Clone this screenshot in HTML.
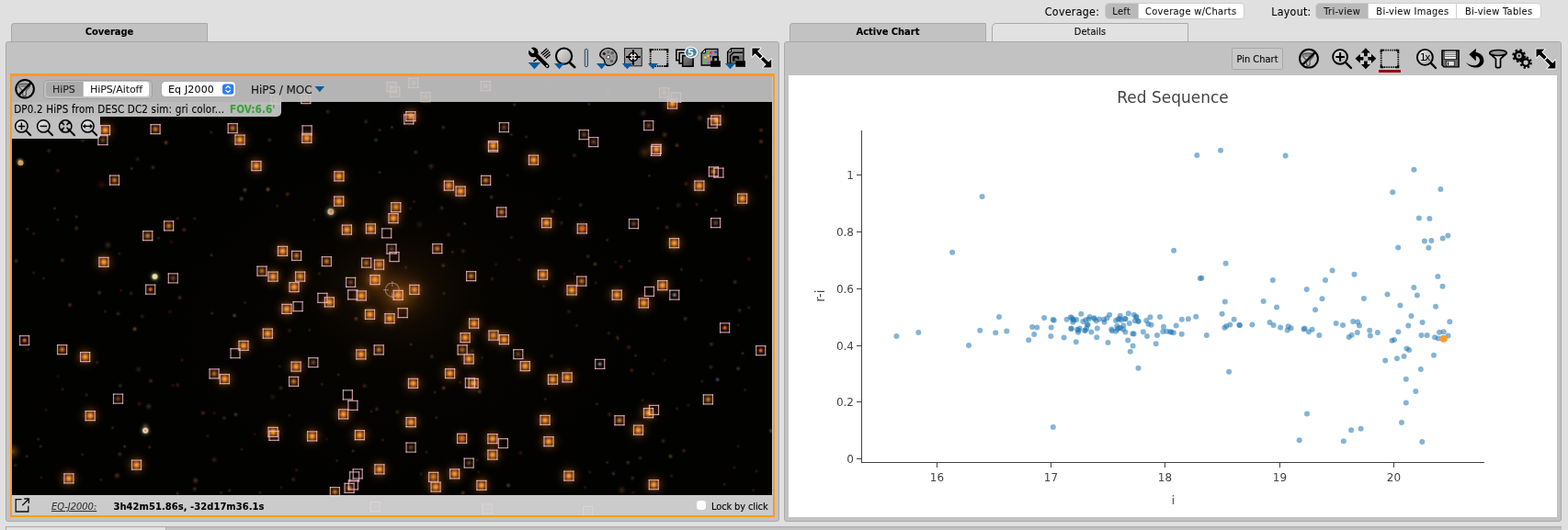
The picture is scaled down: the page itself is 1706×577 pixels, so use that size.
<!DOCTYPE html>
<html>
<head>
<meta charset="utf-8">
<title>Red Sequence</title>
<style>
*{box-sizing:border-box;}
html,body{margin:0;padding:0;}
body{width:1706px;height:577px;overflow:hidden;background:#e0e0e0;font-family:"DejaVu Sans Condensed","DejaVu Sans","Liberation Sans",sans-serif;font-size:12px;color:#000;position:relative;-webkit-text-stroke:.1px currentColor;}
.abs{position:absolute;}
.tab{position:absolute;top:25px;height:21px;border:1px solid #a9a9a9;border-bottom:none;border-radius:4px 1.5px 0 0;text-align:center;line-height:17px;font-size:11px;white-space:nowrap;}
.tab.sel{background:#c2c2c2;font-weight:bold;}
.tab.unsel{background:#e2e2e2;height:20px;border-radius:5px 1.5px 0 0;}
.panel{position:absolute;top:45px;height:523px;background:#c2c2c2;border:1px solid #a9a9a9;border-radius:3px;}
.seg{position:absolute;height:18px;border:1px solid #cdcdcd;border-radius:4px;background:#fff;display:flex;overflow:hidden;font-size:11px;letter-spacing:.3px;line-height:17px;white-space:nowrap;}
.seg div{height:100%;text-align:center;color:#151515;}
.seg div.on{background:#b9b9b9;}
.seg div+div{border-left:1px solid #d0d0d0;}
.lbl{position:absolute;top:4px;font-size:13px;line-height:16px;white-space:nowrap;}
.ov{position:absolute;background:rgba(200,200,200,0.9);}
.t{position:absolute;white-space:nowrap;line-height:14px;}
svg{display:block;overflow:hidden;}
</style>
</head>
<body>
<div id="root" style="position:absolute;left:0;top:0;width:1706px;height:577px;will-change:transform;">
<!-- top controls -->
<div class="lbl" style="left:1136.8px;top:5px;font-size:12.3px;letter-spacing:.3px;">Coverage:</div>
<div class="seg" style="left:1202px;top:3px;width:152px;"><div class="on" style="width:34.5px;">Left</div><div style="flex:1;">Coverage w/Charts</div></div>
<div class="lbl" style="left:1383.2px;top:5px;font-size:12.3px;letter-spacing:.3px;">Layout:</div>
<div class="seg" style="left:1431px;top:3px;width:246px;"><div class="on" style="width:56.4px;">Tri-view</div><div style="width:96px;">Bi-view Images</div><div style="flex:1;">Bi-view Tables</div></div>
<!-- tabs -->
<div class="tab sel" style="left:12px;width:214px;">Coverage</div>
<div class="tab sel" style="left:859px;width:214px;">Active Chart</div>
<div class="tab unsel" style="left:1079px;width:214px;">Details</div>
<!-- panels -->
<div class="panel" id="lp" style="left:6px;width:842px;"></div>
<div class="panel" id="rp" style="left:853px;width:846px;"></div>
<!-- bottom strip -->
<div class="abs" style="left:6px;top:573px;width:1693px;height:4px;background:#c2c2c2;border-top:1px solid #a9a9a9;"></div>
<div class="abs" style="left:6px;top:573px;width:175px;height:4px;background:#e2e2e2;border:1px solid #a9a9a9;border-bottom:none;"></div>
<!-- orange frame -->
<div class="abs" id="frame" style="left:11px;top:80px;width:832px;height:483px;background:#ff9a1f;"></div>
<div class="abs" style="left:840px;top:83px;width:1px;height:478px;background:#c8c8c8;"></div>
<!-- left toolbar icons -->
<svg class="abs" style="left:570px;top:46px;" width="276" height="34" viewBox="570 46 276 34">
<defs>
<linearGradient id="mg" x1="0" y1="0" x2="1" y2="1"><stop offset="0" stop-color="#e4e4e4"/><stop offset=".5" stop-color="#c2c2c2"/><stop offset="1" stop-color="#a0a0a0"/></linearGradient>
<linearGradient id="dg" x1="0" y1="0" x2="1" y2="1"><stop offset="0" stop-color="#8a8a8a"/><stop offset="1" stop-color="#444"/></linearGradient>
</defs>
<!-- tools: wrench + ruler -->
<g id="i-tools">
<g stroke="#000" stroke-width="1.35" fill="none"><path d="M588.6 58.4L595.2 52.8M590.3 60.1L596.9 54.5M592 61.8L598.4 56.4M593.7 63.5L598.8 59.2"/><path d="M580.4 66.8l3.8-2.6" stroke-width="1.5"/></g>
<path d="M583 59.6L595.6 72" stroke="#000" stroke-width="4.2" stroke-linecap="round" fill="none"/>
<circle cx="580.3" cy="56.9" r="5.3" fill="#000"/>
<path d="M579.6 56.2L573.6 50.2" stroke="#c2c2c2" stroke-width="3.5" stroke-linecap="round" fill="none"/>
<circle cx="595.1" cy="71.7" r="1.05" fill="#e8e8e8"/>
<path d="M574.7 67.9h13.5l-6.75 7.3z" fill="#0a5aa0"/>
</g>
<!-- magnifier -->
<g id="i-mag">
<path d="M620.3 68.5l5 4.700" stroke="#000" stroke-width="2.600" stroke-linecap="round"/>
<circle cx="613.600" cy="61.100" r="8.600" fill="url(#mg)" stroke="#000" stroke-width="2.100"/>
<path d="M602.9 69.1h11.2l-5.6 6.1z" fill="#0a5aa0"/>
</g>
<!-- separator -->
<rect x="636.3" y="53.3" width="3.2" height="19.4" rx="1.6" fill="#9ab8d2" stroke="#2a2a2a" stroke-width=".8"/>
<!-- palette -->
<g id="i-pal">
<path d="M661.6 52.4c5.4 0 9.7 4.2 9.7 9.6c0 5.2-3.6 9.4-8.2 9.4c-3.2 0-4.6-1.4-5-3.4c-.4-2.2-.6-3.6-2.4-4.6c-1.8-1-3-1.6-3-3.4c0-3.8 4-7.6 8.9-7.6z" fill="#9c9c9c" stroke="#000" stroke-width="1.400"/>
<circle cx="657.4" cy="58.5" r="1.5" fill="#111"/><circle cx="661.8" cy="56.7" r="1.6" fill="#6a6a6a"/><circle cx="666.1" cy="57.7" r="1.7" fill="#5c5c5c"/><circle cx="667.7" cy="61.8" r="1.5" fill="#888"/><circle cx="665.4" cy="66.4" r="1.7" fill="#606060"/>
<circle cx="661.800" cy="62.200" r="1.900" fill="#f4f4f4" stroke="#333" stroke-width=".9"/>
<path d="M648.9 69.1h11.2l-5.6 6.1z" fill="#0a5aa0"/>
</g>
<!-- crosshair -->
<g id="i-cross">
<rect x="679.6" y="52.6" width="18.6" height="19.2" fill="#9a9a9a" stroke="#1a1a1a" stroke-width="1"/>
<path d="M679.6 61.9h18.6M688.9 52.6v19.2" stroke="#b4b4b4" stroke-width=".6"/>
<circle cx="688.9" cy="61.9" r="4.6" fill="#e2e2e2" stroke="#000" stroke-width="1.6"/>
<path d="M681 61.9h6M690.8 61.9h6M688.9 54v6M688.9 63.8v7" stroke="#000" stroke-width="2"/>
<rect x="688.1" y="61.1" width="1.6" height="1.6" fill="#000"/>
<path d="M676.9 69.1h11.2l-5.6 6.1z" fill="#0a5aa0"/>
</g>
<!-- select -->
<g id="i-sel">
<rect x="707.700" y="54" width="18.600" height="18" fill="none" stroke="#000" stroke-width="1.800" stroke-dasharray="1.300 1.025"/>
<path d="M707.700 56.800v-2.800h2.800M723.500 54h2.800v2.800M726.300 69.200v2.800h-2.800" fill="none" stroke="#000" stroke-width="1.900"/>
<path d="M705 69.100h11l-5.500 6.100z" fill="#0a5aa0"/>
</g>
<!-- layers -->
<g id="i-lay">
<rect x="735.9" y="54.2" width="10.4" height="11.4" fill="#d4d4d4" stroke="#000" stroke-width="1.6"/>
<rect x="739.1" y="57.4" width="10.6" height="11.6" fill="#c0c0c0" stroke="#000" stroke-width="1.6"/>
<rect x="742.7" y="60.6" width="11.4" height="11.6" fill="url(#dg)" stroke="#000" stroke-width="1.6"/>
<ellipse cx="752.5" cy="57.3" rx="8.1" ry="6.9" fill="#777" opacity=".35"/><ellipse cx="752" cy="56.9" rx="7.5" ry="6.5" fill="#f4f4f4"/><ellipse cx="751.9" cy="57" rx="6" ry="5" fill="#4687a4"/>
<text x="751.4" y="60.8" font-family="'DejaVu Sans','Liberation Sans',sans-serif" font-weight="bold" font-size="10" fill="#fff" text-anchor="middle">5</text>
</g>
<!-- image + lock -->
<g id="i-imglock">
<path d="M767.6 53.4h13.4v17.6h-17.8v-13.2z" fill="#8f8f8f" stroke="#000" stroke-width="1.3"/>
<path d="M767.6 53.4v4.4h-4.4z" fill="#d8d8d8" stroke="#000" stroke-width="1"/>
<g><circle cx="770.6" cy="56.6" r="1.2" fill="#2ee02e"/><circle cx="773.4" cy="57.4" r="1.2" fill="#f02020"/><circle cx="778.6" cy="56.6" r="1.2" fill="#2030f0"/><circle cx="770.6" cy="60.7" r="1.2" fill="#f0e020"/><circle cx="767.4" cy="62.5" r="1.3" fill="#f0e020"/><circle cx="773" cy="61.5" r="1.1" fill="#2030e0"/><circle cx="770.7" cy="65" r="1.1" fill="#f08020"/><circle cx="766.5" cy="67.7" r="1.2" fill="#2ee02e"/><circle cx="771.5" cy="68.4" r="1.1" fill="#f020e0"/><circle cx="775.9" cy="59.4" r=".8" fill="#f08080"/></g>
<path d="M776.1 66.6v-4.4h5v4.4" fill="#9a9a9a" stroke="#000" stroke-width="2.2" stroke-linejoin="round"/>
<rect x="773.1" y="66.3" width="10.8" height="6.5" fill="#000"/>
</g>
<!-- image lock dropdown -->
<g id="i-lock2">
<path d="M795.6 52.6h13.4v16.6h-17.4v-12.6z" fill="#8a8a8a" stroke="#000" stroke-width="1.3"/>
<path d="M795.6 52.6v4.2h-4z" fill="#d8d8d8" stroke="#000" stroke-width="1"/>
<path d="M794.6 70v-9.4l3.4-3.4h10.4" fill="none" stroke="#000" stroke-width="1.4"/>
<path d="M796.4 60.4h11.4v8h-11.4z" fill="#6a6a6a"/>
<path d="M798.3 66.6v-4.4h4.8v2.2" fill="none" stroke="#000" stroke-width="2.2" stroke-linejoin="round"/>
<rect x="800.4" y="66.3" width="10.6" height="6.5" fill="#000"/>
<path d="M788.9 69.1h11.2l-5.6 6.1z" fill="#0a5aa0"/>
</g>
<!-- expand -->
<g id="i-exp">
<path d="M818.4 52.5H827.4L824.2 55.7L836.1 67.6L839.3 64.4V73.4H830.3L833.5 70.2L821.6 58.3L818.4 61.5Z" fill="#000" stroke="#fff" stroke-width="1.8" stroke-linejoin="round" paint-order="stroke"/>
<path d="M827.2 64.3L830.4 61.1" stroke="#fff" stroke-width="1.4" fill="none"/>
</g>
</svg>
<svg class="abs" id="sky" style="left:13px;top:83px;" width="827" height="478" viewBox="13 83 827 478">
<defs>
<radialGradient id="gb"><stop offset="0" stop-color="#fba238"/><stop offset=".08" stop-color="#f4922c" stop-opacity=".97"/><stop offset=".17" stop-color="#cc741e" stop-opacity=".85"/><stop offset=".28" stop-color="#905012" stop-opacity=".66"/><stop offset=".42" stop-color="#64360c" stop-opacity=".45"/><stop offset=".6" stop-color="#442408" stop-opacity=".27"/><stop offset=".8" stop-color="#341a05" stop-opacity=".1"/><stop offset="1" stop-color="#301804" stop-opacity="0"/></radialGradient>
<radialGradient id="gm"><stop offset="0" stop-color="#e08a2a" stop-opacity=".95"/><stop offset=".18" stop-color="#b06a1c" stop-opacity=".8"/><stop offset=".4" stop-color="#6a3a0c" stop-opacity=".45"/><stop offset=".7" stop-color="#40220a" stop-opacity=".18"/><stop offset="1" stop-color="#301804" stop-opacity="0"/></radialGradient>
<radialGradient id="gd"><stop offset="0" stop-color="#a87030" stop-opacity=".7"/><stop offset=".5" stop-color="#6a4418" stop-opacity=".45"/><stop offset="1" stop-color="#402004" stop-opacity="0"/></radialGradient>
<radialGradient id="gh"><stop offset="0" stop-color="#c87820" stop-opacity=".6"/><stop offset=".4" stop-color="#90500f" stop-opacity=".35"/><stop offset="1" stop-color="#402004" stop-opacity="0"/></radialGradient>
<radialGradient id="grc"><stop offset="0" stop-color="#ff5a20"/><stop offset=".5" stop-color="#e84a18" stop-opacity=".85"/><stop offset="1" stop-color="#a03008" stop-opacity="0"/></radialGradient>
<radialGradient id="go"><stop offset="0" stop-color="#e08a30"/><stop offset=".4" stop-color="#b06820" stop-opacity=".6"/><stop offset="1" stop-color="#603008" stop-opacity="0"/></radialGradient>
<radialGradient id="gy"><stop offset="0" stop-color="#d8c070"/><stop offset=".4" stop-color="#a08848" stop-opacity=".6"/><stop offset="1" stop-color="#504020" stop-opacity="0"/></radialGradient>
<radialGradient id="gr"><stop offset="0" stop-color="#e05020"/><stop offset=".4" stop-color="#a03818" stop-opacity=".6"/><stop offset="1" stop-color="#501808" stop-opacity="0"/></radialGradient>
<radialGradient id="gw"><stop offset="0" stop-color="#c8c8c0"/><stop offset=".4" stop-color="#8a8a88" stop-opacity=".6"/><stop offset="1" stop-color="#404040" stop-opacity="0"/></radialGradient>
<radialGradient id="gp"><stop offset="0" stop-color="#e09090"/><stop offset=".4" stop-color="#a06060" stop-opacity=".6"/><stop offset="1" stop-color="#503030" stop-opacity="0"/></radialGradient>
<radialGradient id="gbl"><stop offset="0" stop-color="#90b8e8"/><stop offset=".4" stop-color="#6080a8" stop-opacity=".6"/><stop offset="1" stop-color="#203040" stop-opacity="0"/></radialGradient>
<radialGradient id="sh"><stop offset="0" stop-color="#f0f0c0" stop-opacity=".9"/><stop offset=".3" stop-color="#c0c890" stop-opacity=".6"/><stop offset=".6" stop-color="#707850" stop-opacity=".25"/><stop offset="1" stop-color="#303020" stop-opacity="0"/></radialGradient>
<radialGradient id="sc"><stop offset="0" stop-color="#ff7060"/><stop offset=".5" stop-color="#f0a080"/><stop offset="1" stop-color="#f0f0c8" stop-opacity=".6"/></radialGradient>
<radialGradient id="syc"><stop offset="0" stop-color="#ff9080"/><stop offset=".35" stop-color="#fff0a0"/><stop offset="1" stop-color="#f0f0b0" stop-opacity=".5"/></radialGradient>
<radialGradient id="smc"><stop offset="0" stop-color="#ff2060"/><stop offset=".4" stop-color="#ffd0b0"/><stop offset="1" stop-color="#f0f0c0" stop-opacity=".5"/></radialGradient>
<radialGradient id="cl"><stop offset="0" stop-color="#a05a14" stop-opacity=".55"/><stop offset=".35" stop-color="#6a3a0c" stop-opacity=".3"/><stop offset="1" stop-color="#201004" stop-opacity="0"/></radialGradient>
</defs>

<rect x="13" y="83" width="827" height="478" fill="#020201"/>
<g id="glow">
<ellipse id="haze" cx="440" cy="350" rx="330" ry="230" fill="url(#cl)" opacity=".1"/>
<ellipse cx="428" cy="310" rx="110" ry="80" fill="url(#cl)" opacity=".42"/>
<ellipse cx="436" cy="322" rx="45" ry="38" fill="url(#cl)" opacity=".9"/>
<circle cx="22.5" cy="177.3" r="7" fill="url(#gb)"/><circle cx="22.5" cy="177.3" r="3" fill="#ffd070" opacity=".9"/>
</g>

<g id="faint">
<circle cx="21.7" cy="176.1" r="5.4" fill="url(#gy)" opacity="0.95"/>
<circle cx="180.6" cy="155.2" r="3.6" fill="url(#go)" opacity="0.47"/>
<circle cx="89.9" cy="152.7" r="3.6" fill="url(#go)" opacity="0.28"/>
<circle cx="53.3" cy="164.1" r="3.6" fill="url(#gw)" opacity="0.24"/>
<circle cx="229.7" cy="144.1" r="2.7" fill="url(#go)" opacity="0.28"/>
<circle cx="149.8" cy="173.2" r="3.6" fill="url(#gw)" opacity="0.19"/>
<circle cx="356.6" cy="121.6" r="3.6" fill="url(#go)" opacity="0.28"/>
<circle cx="398.2" cy="132.4" r="3.6" fill="url(#gw)" opacity="0.24"/>
<circle cx="409" cy="152.4" r="3.6" fill="url(#gw)" opacity="0.28"/>
<circle cx="452.3" cy="165.7" r="3.6" fill="url(#gy)" opacity="0.28"/>
<circle cx="482.3" cy="138.6" r="3.6" fill="url(#gy)" opacity="0.24"/>
<circle cx="559.7" cy="114.1" r="2.7" fill="url(#go)" opacity="0.38"/>
<circle cx="426.5" cy="138.6" r="2.7" fill="url(#gy)" opacity="0.28"/>
<circle cx="293.3" cy="152.4" r="3.6" fill="url(#gw)" opacity="0.24"/>
<circle cx="556.4" cy="146.6" r="2.7" fill="url(#gy)" opacity="0.24"/>
<circle cx="413.2" cy="141.6" r="2.7" fill="url(#go)" opacity="0.28"/>
<circle cx="723.2" cy="146.6" r="4.5" fill="url(#go)" opacity="0.33"/>
<circle cx="736.5" cy="158.2" r="3.6" fill="url(#go)" opacity="0.38"/>
<circle cx="761.4" cy="128.3" r="4.5" fill="url(#go)" opacity="0.28"/>
<circle cx="828" cy="141.6" r="3.6" fill="url(#gr)" opacity="0.47"/>
<circle cx="828" cy="154.1" r="3.6" fill="url(#go)" opacity="0.43"/>
<circle cx="701.5" cy="165.7" r="9" fill="url(#go)" opacity="0.28"/>
<circle cx="624.9" cy="169.1" r="3.6" fill="url(#go)" opacity="0.28"/>
<circle cx="661.6" cy="98.6" r="3.6" fill="url(#gy)" opacity="0.28"/>
<circle cx="699.8" cy="123.3" r="5.4" fill="url(#gw)" opacity="0.19"/>
<circle cx="640.8" cy="113.3" r="2.7" fill="url(#go)" opacity="0.28"/>
<circle cx="572.5" cy="149.1" r="2.7" fill="url(#go)" opacity="0.28"/>
<circle cx="786.4" cy="115.8" r="2.7" fill="url(#go)" opacity="0.24"/>
<circle cx="600" cy="90" r="2.7" fill="url(#go)" opacity="0.28"/>
<circle cx="62.9" cy="185.7" r="3.6" fill="url(#gr)" opacity="0.38"/>
<circle cx="166.5" cy="182.3" r="3.6" fill="url(#gp)" opacity="0.33"/>
<circle cx="143.2" cy="183.5" r="2.7" fill="url(#gw)" opacity="0.28"/>
<circle cx="110.7" cy="201" r="7.2" fill="url(#gr)" opacity="0.19"/>
<circle cx="266.4" cy="206.8" r="3.6" fill="url(#gy)" opacity="0.38"/>
<circle cx="262.7" cy="216.3" r="3.6" fill="url(#gy)" opacity="0.38"/>
<circle cx="200.3" cy="250.1" r="3.6" fill="url(#gr)" opacity="0.47"/>
<circle cx="83.2" cy="248.4" r="3.6" fill="url(#go)" opacity="0.33"/>
<circle cx="83.2" cy="235.9" r="2.7" fill="url(#gw)" opacity="0.28"/>
<circle cx="62.9" cy="239.3" r="2.7" fill="url(#gw)" opacity="0.24"/>
<circle cx="59.4" cy="226.8" r="2.7" fill="url(#go)" opacity="0.33"/>
<circle cx="117.4" cy="266.7" r="5.4" fill="url(#gy)" opacity="0.24"/>
<circle cx="291.3" cy="206.3" r="3.6" fill="url(#gy)" opacity="0.33"/>
<circle cx="172.3" cy="259.2" r="2.7" fill="url(#gw)" opacity="0.24"/>
<circle cx="186.5" cy="263.4" r="3.6" fill="url(#gr)" opacity="0.19"/>
<circle cx="30" cy="249.2" r="2.7" fill="url(#go)" opacity="0.28"/>
<circle cx="36.6" cy="254.2" r="2.7" fill="url(#go)" opacity="0.24"/>
<circle cx="193.1" cy="237.9" r="2.7" fill="url(#go)" opacity="0.28"/>
<circle cx="211.8" cy="237.9" r="2.7" fill="url(#go)" opacity="0.28"/>
<circle cx="312.8" cy="211.3" r="3.6" fill="url(#go)" opacity="0.33"/>
<circle cx="534.7" cy="214.6" r="3.6" fill="url(#go)" opacity="0.33"/>
<circle cx="480.6" cy="226.4" r="3.6" fill="url(#go)" opacity="0.28"/>
<circle cx="469" cy="181" r="4.5" fill="url(#go)" opacity="0.28"/>
<circle cx="413.2" cy="187.7" r="2.7" fill="url(#gy)" opacity="0.28"/>
<circle cx="505.6" cy="243.4" r="2.7" fill="url(#gp)" opacity="0.33"/>
<circle cx="488.1" cy="255.6" r="3.6" fill="url(#go)" opacity="0.24"/>
<circle cx="291.7" cy="206" r="3.6" fill="url(#go)" opacity="0.28"/>
<circle cx="446.5" cy="226.8" r="2.7" fill="url(#gr)" opacity="0.28"/>
<circle cx="450.6" cy="219.6" r="2.7" fill="url(#gr)" opacity="0.28"/>
<circle cx="301.7" cy="224.3" r="2.7" fill="url(#go)" opacity="0.24"/>
<circle cx="552.2" cy="190.6" r="2.7" fill="url(#gw)" opacity="0.24"/>
<circle cx="556.4" cy="258.4" r="2.7" fill="url(#go)" opacity="0.24"/>
<circle cx="341.6" cy="239.3" r="2.7" fill="url(#go)" opacity="0.19"/>
<circle cx="456.5" cy="244.3" r="5.4" fill="url(#gw)" opacity="0.14"/>
<circle cx="601.1" cy="230.1" r="3.6" fill="url(#go)" opacity="0.38"/>
<circle cx="631.6" cy="223.1" r="3.6" fill="url(#gy)" opacity="0.24"/>
<circle cx="738.1" cy="223.4" r="4.5" fill="url(#gw)" opacity="0.19"/>
<circle cx="725.7" cy="247.6" r="3.6" fill="url(#go)" opacity="0.33"/>
<circle cx="715.7" cy="226.8" r="2.7" fill="url(#go)" opacity="0.28"/>
<circle cx="833.9" cy="192.6" r="3.6" fill="url(#gr)" opacity="0.28"/>
<circle cx="660.7" cy="261.2" r="2.7" fill="url(#go)" opacity="0.28"/>
<circle cx="799.7" cy="223.4" r="2.7" fill="url(#gp)" opacity="0.28"/>
<circle cx="706.5" cy="191.3" r="2.7" fill="url(#gw)" opacity="0.24"/>
<circle cx="746.5" cy="200.1" r="3.6" fill="url(#go)" opacity="0.28"/>
<circle cx="610.8" cy="242.6" r="3.6" fill="url(#gy)" opacity="0.19"/>
<circle cx="778.9" cy="228.9" r="2.7" fill="url(#gy)" opacity="0.24"/>
<circle cx="608.3" cy="216.5" r="2.7" fill="url(#gr)" opacity="0.24"/>
<circle cx="758.1" cy="222.6" r="2.7" fill="url(#go)" opacity="0.28"/>
<circle cx="67.9" cy="283.3" r="3.6" fill="url(#go)" opacity="0.33"/>
<circle cx="17.5" cy="284" r="3.6" fill="url(#go)" opacity="0.33"/>
<circle cx="76.1" cy="331.9" r="3.6" fill="url(#go)" opacity="0.38"/>
<circle cx="146.5" cy="358.1" r="3.6" fill="url(#go)" opacity="0.57"/>
<circle cx="108.2" cy="318.6" r="3.6" fill="url(#gw)" opacity="0.28"/>
<circle cx="142.7" cy="319.4" r="3.6" fill="url(#go)" opacity="0.24"/>
<circle cx="195.6" cy="324.1" r="3.6" fill="url(#go)" opacity="0.33"/>
<circle cx="255" cy="343.6" r="3.6" fill="url(#gy)" opacity="0.38"/>
<circle cx="230.6" cy="341.1" r="2.7" fill="url(#go)" opacity="0.33"/>
<circle cx="128.5" cy="341.6" r="3.6" fill="url(#gw)" opacity="0.24"/>
<circle cx="114.5" cy="339.1" r="2.7" fill="url(#gr)" opacity="0.33"/>
<circle cx="230.1" cy="277.8" r="2.7" fill="url(#gw)" opacity="0.28"/>
<circle cx="131.5" cy="316.1" r="2.7" fill="url(#gr)" opacity="0.28"/>
<circle cx="129.9" cy="276.2" r="2.7" fill="url(#gw)" opacity="0.19"/>
<circle cx="47.5" cy="303.1" r="2.7" fill="url(#gy)" opacity="0.19"/>
<circle cx="36.6" cy="297" r="2.7" fill="url(#gw)" opacity="0.19"/>
<circle cx="154.8" cy="344.4" r="3.6" fill="url(#gy)" opacity="0.19"/>
<circle cx="184.8" cy="339.4" r="3.6" fill="url(#gr)" opacity="0.19"/>
<circle cx="266.4" cy="329.4" r="2.7" fill="url(#gw)" opacity="0.19"/>
<circle cx="387.4" cy="346.9" r="3.6" fill="url(#go)" opacity="0.43"/>
<circle cx="482.3" cy="289.1" r="3.6" fill="url(#gy)" opacity="0.28"/>
<circle cx="535.5" cy="303.6" r="3.6" fill="url(#gr)" opacity="0.28"/>
<circle cx="315" cy="359.9" r="3.6" fill="url(#gr)" opacity="0.28"/>
<circle cx="503.9" cy="273.3" r="3.6" fill="url(#go)" opacity="0.28"/>
<circle cx="441.5" cy="291.1" r="2.7" fill="url(#go)" opacity="0.24"/>
<circle cx="483.1" cy="319.4" r="2.7" fill="url(#gy)" opacity="0.24"/>
<circle cx="539.7" cy="287.8" r="2.7" fill="url(#gr)" opacity="0.24"/>
<circle cx="564.7" cy="282.8" r="2.7" fill="url(#go)" opacity="0.24"/>
<circle cx="492.3" cy="274.5" r="2.7" fill="url(#gy)" opacity="0.24"/>
<circle cx="347.4" cy="297.8" r="2.7" fill="url(#gy)" opacity="0.19"/>
<circle cx="336.6" cy="359.4" r="2.7" fill="url(#gy)" opacity="0.19"/>
<circle cx="647.4" cy="287.5" r="3.6" fill="url(#gy)" opacity="0.33"/>
<circle cx="675.7" cy="290.3" r="3.6" fill="url(#gr)" opacity="0.33"/>
<circle cx="669.9" cy="285.3" r="2.7" fill="url(#gr)" opacity="0.28"/>
<circle cx="639.9" cy="279" r="3.6" fill="url(#gy)" opacity="0.24"/>
<circle cx="799.7" cy="307" r="3.6" fill="url(#gy)" opacity="0.28"/>
<circle cx="745.6" cy="346.9" r="3.6" fill="url(#gy)" opacity="0.28"/>
<circle cx="814.7" cy="282" r="3.6" fill="url(#gr)" opacity="0.28"/>
<circle cx="804.7" cy="337.8" r="3.6" fill="url(#gy)" opacity="0.24"/>
<circle cx="814.7" cy="334.9" r="2.7" fill="url(#gy)" opacity="0.24"/>
<circle cx="619.1" cy="339.1" r="3.6" fill="url(#gw)" opacity="0.19"/>
<circle cx="624.9" cy="297.8" r="2.7" fill="url(#gr)" opacity="0.28"/>
<circle cx="648.2" cy="307.8" r="2.7" fill="url(#gr)" opacity="0.28"/>
<circle cx="591.6" cy="311.5" r="2.7" fill="url(#gy)" opacity="0.24"/>
<circle cx="662.4" cy="362.7" r="2.7" fill="url(#go)" opacity="0.28"/>
<circle cx="671.5" cy="366.9" r="2.7" fill="url(#go)" opacity="0.28"/>
<circle cx="741.5" cy="293.3" r="2.7" fill="url(#gy)" opacity="0.24"/>
<circle cx="684.9" cy="284" r="2.7" fill="url(#gy)" opacity="0.24"/>
<circle cx="763.1" cy="305.3" r="2.7" fill="url(#gw)" opacity="0.19"/>
<circle cx="627.4" cy="354.4" r="2.7" fill="url(#gw)" opacity="0.19"/>
<circle cx="803.1" cy="353.9" r="2.7" fill="url(#go)" opacity="0.19"/>
<circle cx="193.1" cy="419.1" r="3.6" fill="url(#gr)" opacity="0.33"/>
<circle cx="164" cy="414.6" r="3.6" fill="url(#go)" opacity="0.33"/>
<circle cx="151.5" cy="439.6" r="3.6" fill="url(#gr)" opacity="0.33"/>
<circle cx="161.8" cy="442.4" r="4.5" fill="url(#gy)" opacity="0.28"/>
<circle cx="220.9" cy="449.6" r="3.6" fill="url(#gr)" opacity="0.47"/>
<circle cx="256.4" cy="451.2" r="3.6" fill="url(#gy)" opacity="0.33"/>
<circle cx="150.7" cy="402.1" r="4.5" fill="url(#gy)" opacity="0.19"/>
<circle cx="130.7" cy="419.9" r="3.6" fill="url(#gy)" opacity="0.24"/>
<circle cx="198.1" cy="392.1" r="2.7" fill="url(#gr)" opacity="0.28"/>
<circle cx="158.2" cy="463.7" r="5.4" fill="url(#gw)" opacity="0.28"/>
<circle cx="243.9" cy="455.1" r="3.6" fill="url(#gw)" opacity="0.24"/>
<circle cx="67.9" cy="423.8" r="2.7" fill="url(#go)" opacity="0.24"/>
<circle cx="30.5" cy="380.5" r="2.7" fill="url(#gr)" opacity="0.28"/>
<circle cx="94.1" cy="429.9" r="2.7" fill="url(#gw)" opacity="0.24"/>
<circle cx="233.1" cy="449.9" r="2.7" fill="url(#gr)" opacity="0.28"/>
<circle cx="105.7" cy="394.6" r="3.6" fill="url(#gw)" opacity="0.19"/>
<circle cx="188.1" cy="419.6" r="2.7" fill="url(#gr)" opacity="0.28"/>
<circle cx="50" cy="446.2" r="2.7" fill="url(#gr)" opacity="0.24"/>
<circle cx="63.3" cy="409.6" r="2.7" fill="url(#gr)" opacity="0.19"/>
<circle cx="482.8" cy="422.4" r="3.6" fill="url(#go)" opacity="0.43"/>
<circle cx="521.7" cy="426.3" r="3.6" fill="url(#gw)" opacity="0.38"/>
<circle cx="409.9" cy="445.4" r="3.6" fill="url(#gp)" opacity="0.28"/>
<circle cx="432.3" cy="448.4" r="3.6" fill="url(#go)" opacity="0.28"/>
<circle cx="396.5" cy="420.1" r="3.6" fill="url(#go)" opacity="0.28"/>
<circle cx="305.5" cy="422.4" r="3.6" fill="url(#go)" opacity="0.28"/>
<circle cx="350.3" cy="418.4" r="2.7" fill="url(#go)" opacity="0.24"/>
<circle cx="513.9" cy="381.8" r="3.6" fill="url(#go)" opacity="0.33"/>
<circle cx="469.8" cy="388" r="3.6" fill="url(#gw)" opacity="0.24"/>
<circle cx="447.3" cy="375" r="2.7" fill="url(#gw)" opacity="0.24"/>
<circle cx="368.2" cy="408" r="2.7" fill="url(#gy)" opacity="0.24"/>
<circle cx="296.7" cy="432.1" r="4.5" fill="url(#gw)" opacity="0.14"/>
<circle cx="474.8" cy="454.6" r="2.7" fill="url(#go)" opacity="0.28"/>
<circle cx="315" cy="452.1" r="2.7" fill="url(#gy)" opacity="0.19"/>
<circle cx="304.2" cy="398.8" r="2.7" fill="url(#gy)" opacity="0.19"/>
<circle cx="500.6" cy="416.3" r="2.7" fill="url(#go)" opacity="0.28"/>
<circle cx="524.7" cy="389.3" r="2.7" fill="url(#gr)" opacity="0.28"/>
<circle cx="404" cy="447.9" r="2.7" fill="url(#gw)" opacity="0.19"/>
<circle cx="473.1" cy="427.1" r="2.7" fill="url(#gy)" opacity="0.19"/>
<circle cx="780.6" cy="413.3" r="3.6" fill="url(#gbl)" opacity="0.47"/>
<circle cx="684" cy="378" r="3.6" fill="url(#gr)" opacity="0.38"/>
<circle cx="687.4" cy="403" r="3.6" fill="url(#gr)" opacity="0.38"/>
<circle cx="803.1" cy="401.3" r="3.6" fill="url(#gy)" opacity="0.33"/>
<circle cx="773.9" cy="374.7" r="3.6" fill="url(#gy)" opacity="0.28"/>
<circle cx="773.4" cy="399.6" r="3.6" fill="url(#gy)" opacity="0.24"/>
<circle cx="600" cy="387.5" r="3.6" fill="url(#go)" opacity="0.28"/>
<circle cx="663.2" cy="451.2" r="3.6" fill="url(#go)" opacity="0.28"/>
<circle cx="649.4" cy="439.9" r="2.7" fill="url(#go)" opacity="0.28"/>
<circle cx="723.2" cy="392.1" r="2.7" fill="url(#gr)" opacity="0.28"/>
<circle cx="691.5" cy="387.1" r="2.7" fill="url(#gy)" opacity="0.24"/>
<circle cx="749" cy="441.2" r="2.7" fill="url(#gr)" opacity="0.28"/>
<circle cx="808.1" cy="384.6" r="2.7" fill="url(#gy)" opacity="0.28"/>
<circle cx="710.7" cy="406.8" r="2.7" fill="url(#go)" opacity="0.24"/>
<circle cx="699" cy="435.9" r="2.7" fill="url(#go)" opacity="0.24"/>
<circle cx="619.1" cy="402.1" r="2.7" fill="url(#go)" opacity="0.24"/>
<circle cx="763.9" cy="415.1" r="2.7" fill="url(#gw)" opacity="0.19"/>
<circle cx="593.3" cy="434.6" r="2.7" fill="url(#gw)" opacity="0.19"/>
<circle cx="736.5" cy="444.9" r="2.7" fill="url(#gw)" opacity="0.19"/>
<circle cx="810.6" cy="424.6" r="2.7" fill="url(#go)" opacity="0.24"/>
<circle cx="672.4" cy="368.8" r="2.7" fill="url(#go)" opacity="0.28"/>
<circle cx="13.3" cy="491.5" r="10.8" fill="url(#go)" opacity="0.47"/>
<circle cx="127.4" cy="517.8" r="4.5" fill="url(#go)" opacity="0.38"/>
<circle cx="212.8" cy="523.1" r="4.5" fill="url(#go)" opacity="0.38"/>
<circle cx="211.8" cy="532.3" r="3.6" fill="url(#go)" opacity="0.33"/>
<circle cx="130.4" cy="494.5" r="3.6" fill="url(#go)" opacity="0.33"/>
<circle cx="135.7" cy="486" r="2.7" fill="url(#gw)" opacity="0.33"/>
<circle cx="162.7" cy="486.8" r="2.7" fill="url(#gr)" opacity="0.47"/>
<circle cx="233.1" cy="500.6" r="4.5" fill="url(#gp)" opacity="0.24"/>
<circle cx="193.1" cy="537.2" r="2.7" fill="url(#go)" opacity="0.38"/>
<circle cx="29.1" cy="496.8" r="2.7" fill="url(#go)" opacity="0.28"/>
<circle cx="41.6" cy="478.2" r="2.7" fill="url(#gp)" opacity="0.28"/>
<circle cx="44.1" cy="486" r="2.7" fill="url(#gw)" opacity="0.24"/>
<circle cx="225.9" cy="474.8" r="2.7" fill="url(#gp)" opacity="0.24"/>
<circle cx="16.7" cy="506.5" r="2.7" fill="url(#gy)" opacity="0.24"/>
<circle cx="122.4" cy="465.7" r="2.7" fill="url(#gp)" opacity="0.28"/>
<circle cx="249.7" cy="533.9" r="2.7" fill="url(#gy)" opacity="0.28"/>
<circle cx="240.6" cy="536.4" r="2.7" fill="url(#go)" opacity="0.28"/>
<circle cx="283" cy="536.4" r="2.7" fill="url(#go)" opacity="0.28"/>
<circle cx="277.2" cy="472.7" r="2.7" fill="url(#gr)" opacity="0.24"/>
<circle cx="263" cy="489" r="2.7" fill="url(#gw)" opacity="0.19"/>
<circle cx="89.9" cy="494.8" r="2.7" fill="url(#gy)" opacity="0.19"/>
<circle cx="109.9" cy="522.3" r="2.7" fill="url(#gw)" opacity="0.19"/>
<circle cx="45" cy="519.8" r="2.7" fill="url(#gr)" opacity="0.24"/>
<circle cx="553" cy="528.4" r="3.6" fill="url(#gy)" opacity="0.38"/>
<circle cx="319.1" cy="521.8" r="3.6" fill="url(#go)" opacity="0.28"/>
<circle cx="503.6" cy="536.7" r="3.6" fill="url(#gy)" opacity="0.33"/>
<circle cx="384.1" cy="491" r="2.7" fill="url(#gy)" opacity="0.28"/>
<circle cx="322.5" cy="511.8" r="2.7" fill="url(#go)" opacity="0.24"/>
<circle cx="518.9" cy="501" r="2.7" fill="url(#gr)" opacity="0.33"/>
<circle cx="520.6" cy="513.9" r="2.7" fill="url(#gr)" opacity="0.28"/>
<circle cx="366.6" cy="501.5" r="2.7" fill="url(#gw)" opacity="0.19"/>
<circle cx="464" cy="492.3" r="2.7" fill="url(#gy)" opacity="0.19"/>
<circle cx="458.1" cy="515.9" r="2.7" fill="url(#gy)" opacity="0.19"/>
<circle cx="416.5" cy="479" r="2.7" fill="url(#gw)" opacity="0.19"/>
<circle cx="305.8" cy="530.6" r="2.7" fill="url(#gr)" opacity="0.24"/>
<circle cx="355.8" cy="478.2" r="2.7" fill="url(#gr)" opacity="0.19"/>
<circle cx="566.3" cy="493.1" r="3.6" fill="url(#go)" opacity="0.19"/>
<circle cx="729.5" cy="496.8" r="3.6" fill="url(#gy)" opacity="0.38"/>
<circle cx="683.2" cy="503.5" r="3.6" fill="url(#gp)" opacity="0.33"/>
<circle cx="744" cy="490.6" r="3.6" fill="url(#go)" opacity="0.28"/>
<circle cx="688.2" cy="520.6" r="3.6" fill="url(#go)" opacity="0.28"/>
<circle cx="667.4" cy="515.6" r="3.6" fill="url(#gbl)" opacity="0.28"/>
<circle cx="696.5" cy="498.5" r="3.6" fill="url(#gbl)" opacity="0.24"/>
<circle cx="676.5" cy="533.6" r="5.4" fill="url(#go)" opacity="0.28"/>
<circle cx="721.5" cy="480.1" r="3.6" fill="url(#gw)" opacity="0.24"/>
<circle cx="660.7" cy="503.5" r="2.7" fill="url(#go)" opacity="0.28"/>
<circle cx="803.1" cy="486" r="2.7" fill="url(#gr)" opacity="0.28"/>
<circle cx="798.9" cy="508.9" r="2.7" fill="url(#gr)" opacity="0.28"/>
<circle cx="838.9" cy="469" r="3.6" fill="url(#go)" opacity="0.47"/>
<circle cx="823" cy="512.8" r="2.7" fill="url(#gy)" opacity="0.19"/>
<circle cx="641.6" cy="513.9" r="2.7" fill="url(#go)" opacity="0.19"/>
<circle cx="730.6" cy="518.1" r="2.7" fill="url(#go)" opacity="0.24"/>
<circle cx="788.1" cy="527.3" r="2.7" fill="url(#go)" opacity="0.24"/>
<circle cx="819.7" cy="533.6" r="2.7" fill="url(#gr)" opacity="0.28"/>
<circle cx="636.6" cy="530.6" r="2.7" fill="url(#go)" opacity="0.19"/>
<circle cx="689" cy="536.4" r="2.7" fill="url(#gr)" opacity="0.28"/>
</g>
<g id="stars">
<circle cx="359.9" cy="230.4" r="9" fill="url(#sh)"/><circle cx="359.9" cy="230.4" r="3.4" fill="url(#sc)"/>
<circle cx="168.5" cy="301.1" r="8" fill="url(#sh)"/><circle cx="168.5" cy="301.1" r="3.2" fill="url(#syc)"/>
<circle cx="158.2" cy="468.7" r="8" fill="url(#sh)"/><circle cx="158.2" cy="468.7" r="3.3" fill="url(#smc)"/>
</g>
<g id="gal">
<circle cx="114.5" cy="141.6" r="17" fill="url(#gb)"/>
<circle cx="111.9" cy="152.7" r="5" fill="url(#gd)"/>
<circle cx="169.1" cy="140.6" r="10" fill="url(#gm)"/>
<circle cx="253.2" cy="139.6" r="10" fill="url(#gm)"/>
<circle cx="261" cy="152.2" r="17" fill="url(#gb)"/>
<circle cx="300" cy="108.3" r="10" fill="url(#gm)"/>
<circle cx="332.8" cy="107.5" r="10" fill="url(#gm)"/>
<circle cx="426" cy="94.5" r="10" fill="url(#gm)"/>
<circle cx="429.8" cy="100" r="10" fill="url(#gm)"/>
<circle cx="449.8" cy="90.3" r="10" fill="url(#gm)"/>
<circle cx="463.1" cy="105.5" r="10" fill="url(#gm)"/>
<circle cx="528.4" cy="93.7" r="10" fill="url(#gm)"/>
<circle cx="333.8" cy="150.4" r="17" fill="url(#gb)"/>
<circle cx="446.8" cy="126.6" r="17" fill="url(#gb)"/>
<circle cx="548.4" cy="138.6" r="5" fill="url(#gd)"/>
<circle cx="536.5" cy="158.6" r="17" fill="url(#gb)"/>
<circle cx="722.7" cy="100.8" r="10" fill="url(#gm)"/>
<circle cx="735.6" cy="106.1" r="5" fill="url(#gd)"/>
<circle cx="731.5" cy="113" r="17" fill="url(#gb)"/>
<circle cx="705.7" cy="136.6" r="5" fill="url(#gd)"/>
<circle cx="635.3" cy="146.6" r="5" fill="url(#gd)"/>
<circle cx="645.7" cy="154.6" r="5" fill="url(#gd)"/>
<circle cx="778.9" cy="130.8" r="17" fill="url(#gb)"/>
<circle cx="714.2" cy="162.4" r="17" fill="url(#gb)"/>
<circle cx="580.5" cy="174.1" r="17" fill="url(#gb)"/>
<circle cx="124.5" cy="196.1" r="10" fill="url(#gm)"/>
<circle cx="183.6" cy="245.9" r="10" fill="url(#gm)"/>
<circle cx="160.7" cy="256.7" r="10" fill="url(#gm)"/>
<circle cx="278.9" cy="180.5" r="17" fill="url(#gb)"/>
<circle cx="368.9" cy="191.8" r="17" fill="url(#gb)"/>
<circle cx="368.7" cy="219.1" r="17" fill="url(#gb)"/>
<circle cx="430.8" cy="225.6" r="17" fill="url(#gb)"/>
<circle cx="428" cy="237.6" r="17" fill="url(#gb)"/>
<circle cx="377.4" cy="250.1" r="17" fill="url(#gb)"/>
<circle cx="403.4" cy="248.9" r="17" fill="url(#gb)"/>
<circle cx="488.4" cy="202.1" r="17" fill="url(#gb)"/>
<circle cx="501.1" cy="208" r="17" fill="url(#gb)"/>
<circle cx="528.6" cy="196.3" r="10" fill="url(#gm)"/>
<circle cx="545.7" cy="230.8" r="10" fill="url(#gm)"/>
<circle cx="776.4" cy="186.8" r="10" fill="url(#gm)"/>
<circle cx="760.9" cy="202.1" r="17" fill="url(#gb)"/>
<circle cx="807.6" cy="216" r="17" fill="url(#gb)"/>
<circle cx="594.6" cy="242.6" r="17" fill="url(#gb)"/>
<circle cx="633.3" cy="248.9" r="14" fill="url(#gb)"/><circle cx="633.3" cy="248.9" r="3" fill="url(#grc)"/>
<circle cx="689.5" cy="243.6" r="5" fill="url(#gd)"/>
<circle cx="778.6" cy="242.6" r="5" fill="url(#gd)"/>
<circle cx="733.5" cy="264.6" r="17" fill="url(#gb)"/>
<circle cx="112.9" cy="285.3" r="17" fill="url(#gb)"/>
<circle cx="188.3" cy="302.8" r="5" fill="url(#gd)"/>
<circle cx="163.7" cy="315.1" r="5" fill="url(#gd)"/><circle cx="163.7" cy="315.1" r="2.6" fill="url(#grc)"/>
<circle cx="285" cy="295" r="10" fill="url(#gm)"/>
<circle cx="291.3" cy="363.2" r="17" fill="url(#gb)"/>
<circle cx="307.5" cy="273.3" r="17" fill="url(#gb)"/>
<circle cx="322.6" cy="278.3" r="10" fill="url(#gm)"/>
<circle cx="355.4" cy="284.5" r="10" fill="url(#gm)"/>
<circle cx="398.7" cy="286.2" r="10" fill="url(#gm)"/>
<circle cx="412.5" cy="288.1" r="17" fill="url(#gb)"/>
<circle cx="426" cy="271.2" r="5" fill="url(#gd)"/>
<circle cx="475.8" cy="270.7" r="10" fill="url(#gm)"/>
<circle cx="297" cy="301.1" r="17" fill="url(#gb)"/>
<circle cx="326.6" cy="301.1" r="17" fill="url(#gb)"/>
<circle cx="320" cy="312.5" r="17" fill="url(#gb)"/>
<circle cx="381.6" cy="307.3" r="5" fill="url(#gd)"/>
<circle cx="408" cy="304.5" r="26" fill="url(#gh)" opacity=".8"/><circle cx="408" cy="304.5" r="19" fill="url(#gb)"/>
<circle cx="450.8" cy="315.4" r="17" fill="url(#gb)"/>
<circle cx="433.2" cy="321.4" r="26" fill="url(#gh)" opacity=".8"/><circle cx="433.2" cy="321.4" r="19" fill="url(#gb)"/>
<circle cx="393.2" cy="321.9" r="17" fill="url(#gb)"/>
<circle cx="358.4" cy="328.9" r="17" fill="url(#gb)"/>
<circle cx="312" cy="336.4" r="17" fill="url(#gb)"/>
<circle cx="402.5" cy="342.3" r="17" fill="url(#gb)"/>
<circle cx="424" cy="346.6" r="17" fill="url(#gb)"/>
<circle cx="512.6" cy="300.6" r="10" fill="url(#gm)"/>
<circle cx="515.6" cy="352.2" r="17" fill="url(#gb)"/>
<circle cx="590.5" cy="299" r="17" fill="url(#gb)"/>
<circle cx="632.8" cy="306.1" r="10" fill="url(#gm)"/>
<circle cx="622.1" cy="315.9" r="17" fill="url(#gb)"/>
<circle cx="671.2" cy="321.1" r="17" fill="url(#gb)"/>
<circle cx="720.8" cy="310.6" r="17" fill="url(#gb)"/>
<circle cx="700.3" cy="329.9" r="17" fill="url(#gb)"/>
<circle cx="733.8" cy="321.1" r="4" fill="url(#gw)" opacity=".8"/>
<circle cx="788.6" cy="356.9" r="5" fill="url(#gd)"/><circle cx="788.6" cy="356.9" r="2.6" fill="url(#grc)"/>
<circle cx="26.6" cy="370.5" r="5" fill="url(#gd)"/><circle cx="26.6" cy="370.5" r="2.6" fill="url(#grc)"/>
<circle cx="67.6" cy="380.5" r="10" fill="url(#gm)"/>
<circle cx="92.6" cy="388.5" r="17" fill="url(#gb)"/>
<circle cx="265" cy="376.3" r="17" fill="url(#gb)"/>
<circle cx="233.1" cy="406.8" r="10" fill="url(#gm)"/>
<circle cx="244.4" cy="412.6" r="17" fill="url(#gb)"/>
<circle cx="128.5" cy="434.1" r="5" fill="url(#gd)"/>
<circle cx="98.2" cy="452.6" r="17" fill="url(#gb)"/>
<circle cx="322.1" cy="399" r="17" fill="url(#gb)"/>
<circle cx="340.8" cy="394.5" r="5" fill="url(#gd)"/>
<circle cx="319.6" cy="415.4" r="10" fill="url(#gm)"/>
<circle cx="392.9" cy="385.8" r="17" fill="url(#gb)"/>
<circle cx="412.2" cy="380.8" r="10" fill="url(#gm)"/>
<circle cx="373.6" cy="450.9" r="17" fill="url(#gb)"/>
<circle cx="449.5" cy="417.4" r="17" fill="url(#gb)"/>
<circle cx="447.1" cy="459.6" r="17" fill="url(#gb)"/>
<circle cx="489.6" cy="406.5" r="17" fill="url(#gb)"/>
<circle cx="503.1" cy="380.8" r="10" fill="url(#gm)"/>
<circle cx="510.1" cy="390.8" r="17" fill="url(#gb)"/>
<circle cx="506.1" cy="367.5" r="17" fill="url(#gb)"/>
<circle cx="537" cy="365.2" r="17" fill="url(#gb)"/>
<circle cx="548.4" cy="369.7" r="17" fill="url(#gb)"/>
<circle cx="563.8" cy="385.5" r="5" fill="url(#gd)"/>
<circle cx="571.3" cy="398.5" r="17" fill="url(#gb)"/>
<circle cx="515.1" cy="417.3" r="17" fill="url(#gb)"/>
<circle cx="601.5" cy="413.1" r="17" fill="url(#gb)"/>
<circle cx="617.1" cy="410.9" r="17" fill="url(#gb)"/>
<circle cx="652.7" cy="396.3" r="4" fill="url(#gw)" opacity=".8"/>
<circle cx="827.7" cy="381.5" r="5" fill="url(#gd)"/><circle cx="827.7" cy="381.5" r="2.6" fill="url(#grc)"/>
<circle cx="770.4" cy="434.9" r="10" fill="url(#gm)"/>
<circle cx="705.5" cy="449.6" r="17" fill="url(#gb)"/>
<circle cx="674" cy="457.6" r="10" fill="url(#gm)"/>
<circle cx="593" cy="457.4" r="17" fill="url(#gb)"/>
<circle cx="148.5" cy="506.1" r="17" fill="url(#gb)"/>
<circle cx="74.9" cy="520.9" r="17" fill="url(#gb)"/>
<circle cx="297" cy="470.3" r="17" fill="url(#gb)"/>
<circle cx="339.6" cy="474.8" r="17" fill="url(#gb)"/>
<circle cx="391.4" cy="473.7" r="17" fill="url(#gb)"/>
<circle cx="447.1" cy="487.1" r="5" fill="url(#gd)"/>
<circle cx="502.6" cy="477.3" r="14" fill="url(#gb)"/><circle cx="502.6" cy="477.3" r="3" fill="url(#grc)"/>
<circle cx="535.9" cy="477.7" r="17" fill="url(#gb)"/>
<circle cx="535.9" cy="495.1" r="17" fill="url(#gb)"/>
<circle cx="510.2" cy="504" r="5" fill="url(#gd)"/>
<circle cx="412.9" cy="510.9" r="17" fill="url(#gb)"/>
<circle cx="494.6" cy="515.8" r="17" fill="url(#gb)"/>
<circle cx="471.6" cy="519.4" r="17" fill="url(#gb)"/>
<circle cx="474.1" cy="530.1" r="17" fill="url(#gb)"/>
<circle cx="523.9" cy="528.4" r="17" fill="url(#gb)"/>
<circle cx="380.1" cy="531.3" r="10" fill="url(#gm)"/>
<circle cx="364.4" cy="535.6" r="10" fill="url(#gm)"/>
<circle cx="408.2" cy="551.7" r="5" fill="url(#gd)"/>
<circle cx="530.2" cy="553.9" r="5" fill="url(#gd)"/>
<circle cx="597" cy="480.6" r="17" fill="url(#gb)"/>
<circle cx="694.5" cy="468.2" r="17" fill="url(#gb)"/>
<circle cx="618.9" cy="518.1" r="17" fill="url(#gb)"/>
<circle cx="711.3" cy="527.6" r="17" fill="url(#gb)"/>
<circle cx="639.6" cy="556.4" r="5" fill="url(#gd)"/>
</g>
<g id="cat" fill="none" stroke="#ffc0d0" stroke-opacity=".74" stroke-width="1.25">
<path d="M108.9 136.6H120.1M108.9 146.6H120.1M106.3 147.7H117.5M106.3 157.7H117.5M163.5 135.6H174.7M163.5 145.6H174.7M247.6 134.6H258.8M247.6 144.6H258.8M255.4 147.2H266.6M255.4 157.2H266.6M294.4 103.3H305.6M294.4 113.3H305.6M327.2 102.5H338.4M327.2 112.5H338.4M420.4 89.5H431.6M420.4 99.5H431.6M424.2 95H435.4M424.2 105H435.4M444.2 85.3H455.4M444.2 95.3H455.4M457.5 100.5H468.7M457.5 110.5H468.7M522.8 88.7H534M522.8 98.7H534M328.5 136.8H339.7M328.5 146.8H339.7M328.2 145.4H339.4M328.2 155.4H339.4M441.2 121.6H452.4M441.2 131.6H452.4M439.2 124.9H450.4M439.2 134.9H450.4M542.8 133.6H554M542.8 143.6H554M530.9 153.6H542.1M530.9 163.6H542.1M530.9 155.2H542.1M530.9 165.2H542.1M717.1 95.8H728.3M717.1 105.8H728.3M730 101.1H741.2M730 111.1H741.2M725.9 108H737.1M725.9 118H737.1M700.1 131.6H711.3M700.1 141.6H711.3M629.7 141.6H640.9M629.7 151.6H640.9M640.1 149.6H651.3M640.1 159.6H651.3M773.3 125.8H784.5M773.3 135.8H784.5M769.7 129.1H780.9M769.7 139.1H780.9M708.6 157.4H719.8M708.6 167.4H719.8M707.9 159.4H719.1M707.9 169.4H719.1M574.9 169.1H586.1M574.9 179.1H586.1M118.9 191.1H130.1M118.9 201.1H130.1M178 240.9H189.2M178 250.9H189.2M155.1 251.7H166.3M155.1 261.7H166.3M273.3 175.5H284.5M273.3 185.5H284.5M363.3 186.8H374.5M363.3 196.8H374.5M363.1 214.1H374.3M363.1 224.1H374.3M425.2 220.6H436.4M425.2 230.6H436.4M422.4 232.6H433.6M422.4 242.6H433.6M371.8 245.1H383M371.8 255.1H383M397.8 243.9H409M397.8 253.9H409M415.1 248.9H426.3M415.1 258.9H426.3M482.8 197.1H494M482.8 207.1H494M495.5 203H506.7M495.5 213H506.7M523 191.3H534.2M523 201.3H534.2M540.1 225.8H551.3M540.1 235.8H551.3M770.8 181.8H782M770.8 191.8H782M776.3 183H787.5M776.3 193H787.5M755.3 197.1H766.5M755.3 207.1H766.5M802 211H813.2M802 221H813.2M589 237.6H600.2M589 247.6H600.2M627.7 243.9H638.9M627.7 253.9H638.9M683.9 238.6H695.1M683.9 248.6H695.1M773 237.6H784.2M773 247.6H784.2M727.9 259.6H739.1M727.9 269.6H739.1M107.3 280.3H118.5M107.3 290.3H118.5M182.7 297.8H193.9M182.7 307.8H193.9M158.1 310.1H169.3M158.1 320.1H169.3M279.4 290H290.6M279.4 300H290.6M285.7 358.2H296.9M285.7 368.2H296.9M301.9 268.3H313.1M301.9 278.3H313.1M317 273.3H328.2M317 283.3H328.2M349.8 279.5H361M349.8 289.5H361M393.1 281.2H404.3M393.1 291.2H404.3M406.9 283.1H418.1M406.9 293.1H418.1M420.4 266.2H431.6M420.4 276.2H431.6M423.4 274.5H434.6M423.4 284.5H434.6M470.2 265.7H481.4M470.2 275.7H481.4M291.4 296.1H302.6M291.4 306.1H302.6M321 296.1H332.2M321 306.1H332.2M314.4 307.5H325.6M314.4 317.5H325.6M376 302.3H387.2M376 312.3H387.2M402.4 299.5H413.6M402.4 309.5H413.6M445.2 310.4H456.4M445.2 320.4H456.4M427.6 316.4H438.8M427.6 326.4H438.8M378.1 315.9H389.3M378.1 325.9H389.3M387.6 316.9H398.8M387.6 326.9H398.8M345.3 319.4H356.5M345.3 329.4H356.5M352.8 323.9H364M352.8 333.9H364M318.5 328.6H329.7M318.5 338.6H329.7M306.4 331.4H317.6M306.4 341.4H317.6M396.9 337.3H408.1M396.9 347.3H408.1M418.4 341.6H429.6M418.4 351.6H429.6M432.6 335.6H443.8M432.6 345.6H443.8M507 295.6H518.2M507 305.6H518.2M510 347.2H521.2M510 357.2H521.2M584.9 294H596.1M584.9 304H596.1M627.2 301.1H638.4M627.2 311.1H638.4M616.5 310.9H627.7M616.5 320.9H627.7M665.6 316.1H676.8M665.6 326.1H676.8M700.9 312.3H712.1M700.9 322.3H712.1M715.2 305.6H726.4M715.2 315.6H726.4M694.7 324.9H705.9M694.7 334.9H705.9M728.2 316.1H739.4M728.2 326.1H739.4M783 351.9H794.2M783 361.9H794.2M21 365.5H32.2M21 375.5H32.2M62 375.5H73.2M62 385.5H73.2M87 383.5H98.2M87 393.5H98.2M259.4 371.3H270.6M259.4 381.3H270.6M250.4 379.6H261.6M250.4 389.6H261.6M227.5 401.8H238.7M227.5 411.8H238.7M238.8 407.6H250M238.8 417.6H250M122.9 429.1H134.1M122.9 439.1H134.1M92.6 447.6H103.8M92.6 457.6H103.8M316.5 394H327.7M316.5 404H327.7M335.2 389.5H346.4M335.2 399.5H346.4M314 410.4H325.2M314 420.4H325.2M387.3 380.8H398.5M387.3 390.8H398.5M406.6 375.8H417.8M406.6 385.8H417.8M372.8 424.9H384M372.8 434.9H384M378.3 436.4H389.5M378.3 446.4H389.5M368 445.9H379.2M368 455.9H379.2M443.9 412.4H455.1M443.9 422.4H455.1M441.5 454.6H452.7M441.5 464.6H452.7M484 401.5H495.2M484 411.5H495.2M497.5 375.8H508.7M497.5 385.8H508.7M504.5 385.8H515.7M504.5 395.8H515.7M500.5 362.5H511.7M500.5 372.5H511.7M531.4 360.2H542.6M531.4 370.2H542.6M542.8 364.7H554M542.8 374.7H554M558.2 380.5H569.4M558.2 390.5H569.4M565.7 393.5H576.9M565.7 403.5H576.9M505.8 411.8H517M505.8 421.8H517M509.5 412.3H520.7M509.5 422.3H520.7M595.9 408.1H607.1M595.9 418.1H607.1M611.5 405.9H622.7M611.5 415.9H622.7M647.1 391.3H658.3M647.1 401.3H658.3M822.1 376.5H833.3M822.1 386.5H833.3M764.8 429.9H776M764.8 439.9H776M699.9 444.6H711.1M699.9 454.6H711.1M705.9 441.4H717.1M705.9 451.4H717.1M668.4 452.6H679.6M668.4 462.6H679.6M587.4 452.4H598.6M587.4 462.4H598.6M142.9 501.1H154.1M142.9 511.1H154.1M69.3 515.9H80.5M69.3 525.9H80.5M291.4 465.3H302.6M291.4 475.3H302.6M292.4 469.3H303.6M292.4 479.3H303.6M334 469.8H345.2M334 479.8H345.2M385.8 468.7H397M385.8 478.7H397M441.5 482.1H452.7M441.5 492.1H452.7M497 472.3H508.2M497 482.3H508.2M530.3 472.7H541.5M530.3 482.7H541.5M541.8 477.5H553M541.8 487.5H553M530.3 490.1H541.5M530.3 500.1H541.5M504.6 499H515.8M504.6 509H515.8M407.3 505.9H418.5M407.3 515.9H418.5M383.6 510.9H394.8M383.6 520.9H394.8M380 513.9H391.2M380 523.9H391.2M489 510.8H500.2M489 520.8H500.2M466 514.4H477.2M466 524.4H477.2M468.5 525.1H479.7M468.5 535.1H479.7M518.3 523.4H529.5M518.3 533.4H529.5M378.8 522.8H390M378.8 532.8H390M374.5 526.3H385.7M374.5 536.3H385.7M358.8 530.6H370M358.8 540.6H370M402.6 546.7H413.8M402.6 556.7H413.8M524.6 548.9H535.8M524.6 558.9H535.8M591.4 475.6H602.6M591.4 485.6H602.6M688.9 463.2H700.1M688.9 473.2H700.1M613.3 513.1H624.5M613.3 523.1H624.5M705.7 522.6H716.9M705.7 532.6H716.9M634 551.4H645.2M634 561.4H645.2"/>
<path d="M109.5 136V147.2M119.5 136V147.2M106.9 147.1V158.3M116.9 147.1V158.3M164.1 135V146.2M174.1 135V146.2M248.2 134V145.2M258.2 134V145.2M256 146.6V157.8M266 146.6V157.8M295 102.7V113.9M305 102.7V113.9M327.8 101.9V113.1M337.8 101.9V113.1M421 88.9V100.1M431 88.9V100.1M424.8 94.4V105.6M434.8 94.4V105.6M444.8 84.7V95.9M454.8 84.7V95.9M458.1 99.9V111.1M468.1 99.9V111.1M523.4 88.1V99.3M533.4 88.1V99.3M329.1 136.2V147.4M339.1 136.2V147.4M328.8 144.8V156M338.8 144.8V156M441.8 121V132.2M451.8 121V132.2M439.8 124.3V135.5M449.8 124.3V135.5M543.4 133V144.2M553.4 133V144.2M531.5 153V164.2M541.5 153V164.2M531.5 154.6V165.8M541.5 154.6V165.8M717.7 95.2V106.4M727.7 95.2V106.4M730.6 100.5V111.7M740.6 100.5V111.7M726.5 107.4V118.6M736.5 107.4V118.6M700.7 131V142.2M710.7 131V142.2M630.3 141V152.2M640.3 141V152.2M640.7 149V160.2M650.7 149V160.2M773.9 125.2V136.4M783.9 125.2V136.4M770.3 128.5V139.7M780.3 128.5V139.7M709.2 156.8V168M719.2 156.8V168M708.5 158.8V170M718.5 158.8V170M575.5 168.5V179.7M585.5 168.5V179.7M119.5 190.5V201.7M129.5 190.5V201.7M178.6 240.3V251.5M188.6 240.3V251.5M155.7 251.1V262.3M165.7 251.1V262.3M273.9 174.9V186.1M283.9 174.9V186.1M363.9 186.2V197.4M373.9 186.2V197.4M363.7 213.5V224.7M373.7 213.5V224.7M425.8 220V231.2M435.8 220V231.2M423 232V243.2M433 232V243.2M372.4 244.5V255.7M382.4 244.5V255.7M398.4 243.3V254.5M408.4 243.3V254.5M415.7 248.3V259.5M425.7 248.3V259.5M483.4 196.5V207.7M493.4 196.5V207.7M496.1 202.4V213.6M506.1 202.4V213.6M523.6 190.7V201.9M533.6 190.7V201.9M540.7 225.2V236.4M550.7 225.2V236.4M771.4 181.2V192.4M781.4 181.2V192.4M776.9 182.4V193.6M786.9 182.4V193.6M755.9 196.5V207.7M765.9 196.5V207.7M802.6 210.4V221.6M812.6 210.4V221.6M589.6 237V248.2M599.6 237V248.2M628.3 243.3V254.5M638.3 243.3V254.5M684.5 238V249.2M694.5 238V249.2M773.6 237V248.2M783.6 237V248.2M728.5 259V270.2M738.5 259V270.2M107.9 279.7V290.9M117.9 279.7V290.9M183.3 297.2V308.4M193.3 297.2V308.4M158.7 309.5V320.7M168.7 309.5V320.7M280 289.4V300.6M290 289.4V300.6M286.3 357.6V368.8M296.3 357.6V368.8M302.5 267.7V278.9M312.5 267.7V278.9M317.6 272.7V283.9M327.6 272.7V283.9M350.4 278.9V290.1M360.4 278.9V290.1M393.7 280.6V291.8M403.7 280.6V291.8M407.5 282.5V293.7M417.5 282.5V293.7M421 265.6V276.8M431 265.6V276.8M424 273.9V285.1M434 273.9V285.1M470.8 265.1V276.3M480.8 265.1V276.3M292 295.5V306.7M302 295.5V306.7M321.6 295.5V306.7M331.6 295.5V306.7M315 306.9V318.1M325 306.9V318.1M376.6 301.7V312.9M386.6 301.7V312.9M403 298.9V310.1M413 298.9V310.1M445.8 309.8V321M455.8 309.8V321M428.2 315.8V327M438.2 315.8V327M378.7 315.3V326.5M388.7 315.3V326.5M388.2 316.3V327.5M398.2 316.3V327.5M345.9 318.8V330M355.9 318.8V330M353.4 323.3V334.5M363.4 323.3V334.5M319.1 328V339.2M329.1 328V339.2M307 330.8V342M317 330.8V342M397.5 336.7V347.9M407.5 336.7V347.9M419 341V352.2M429 341V352.2M433.2 335V346.2M443.2 335V346.2M507.6 295V306.2M517.6 295V306.2M510.6 346.6V357.8M520.6 346.6V357.8M585.5 293.4V304.6M595.5 293.4V304.6M627.8 300.5V311.7M637.8 300.5V311.7M617.1 310.3V321.5M627.1 310.3V321.5M666.2 315.5V326.7M676.2 315.5V326.7M701.5 311.7V322.9M711.5 311.7V322.9M715.8 305V316.2M725.8 305V316.2M695.3 324.3V335.5M705.3 324.3V335.5M728.8 315.5V326.7M738.8 315.5V326.7M783.6 351.3V362.5M793.6 351.3V362.5M21.6 364.9V376.1M31.6 364.9V376.1M62.6 374.9V386.1M72.6 374.9V386.1M87.6 382.9V394.1M97.6 382.9V394.1M260 370.7V381.9M270 370.7V381.9M251 379V390.2M261 379V390.2M228.1 401.2V412.4M238.1 401.2V412.4M239.4 407V418.2M249.4 407V418.2M123.5 428.5V439.7M133.5 428.5V439.7M93.2 447V458.2M103.2 447V458.2M317.1 393.4V404.6M327.1 393.4V404.6M335.8 388.9V400.1M345.8 388.9V400.1M314.6 409.8V421M324.6 409.8V421M387.9 380.2V391.4M397.9 380.2V391.4M407.2 375.2V386.4M417.2 375.2V386.4M373.4 424.3V435.5M383.4 424.3V435.5M378.9 435.8V447M388.9 435.8V447M368.6 445.3V456.5M378.6 445.3V456.5M444.5 411.8V423M454.5 411.8V423M442.1 454V465.2M452.1 454V465.2M484.6 400.9V412.1M494.6 400.9V412.1M498.1 375.2V386.4M508.1 375.2V386.4M505.1 385.2V396.4M515.1 385.2V396.4M501.1 361.9V373.1M511.1 361.9V373.1M532 359.6V370.8M542 359.6V370.8M543.4 364.1V375.3M553.4 364.1V375.3M558.8 379.9V391.1M568.8 379.9V391.1M566.3 392.9V404.1M576.3 392.9V404.1M506.4 411.2V422.4M516.4 411.2V422.4M510.1 411.7V422.9M520.1 411.7V422.9M596.5 407.5V418.7M606.5 407.5V418.7M612.1 405.3V416.5M622.1 405.3V416.5M647.7 390.7V401.9M657.7 390.7V401.9M822.7 375.9V387.1M832.7 375.9V387.1M765.4 429.3V440.5M775.4 429.3V440.5M700.5 444V455.2M710.5 444V455.2M706.5 440.8V452M716.5 440.8V452M669 452V463.2M679 452V463.2M588 451.8V463M598 451.8V463M143.5 500.5V511.7M153.5 500.5V511.7M69.9 515.3V526.5M79.9 515.3V526.5M292 464.7V475.9M302 464.7V475.9M293 468.7V479.9M303 468.7V479.9M334.6 469.2V480.4M344.6 469.2V480.4M386.4 468.1V479.3M396.4 468.1V479.3M442.1 481.5V492.7M452.1 481.5V492.7M497.6 471.7V482.9M507.6 471.7V482.9M530.9 472.1V483.3M540.9 472.1V483.3M542.4 476.9V488.1M552.4 476.9V488.1M530.9 489.5V500.7M540.9 489.5V500.7M505.2 498.4V509.6M515.2 498.4V509.6M407.9 505.3V516.5M417.9 505.3V516.5M384.2 510.3V521.5M394.2 510.3V521.5M380.6 513.3V524.5M390.6 513.3V524.5M489.6 510.2V521.4M499.6 510.2V521.4M466.6 513.8V525M476.6 513.8V525M469.1 524.5V535.7M479.1 524.5V535.7M518.9 522.8V534M528.9 522.8V534M379.4 522.2V533.4M389.4 522.2V533.4M375.1 525.7V536.9M385.1 525.7V536.9M359.4 530V541.2M369.4 530V541.2M403.2 546.1V557.3M413.2 546.1V557.3M525.2 548.3V559.5M535.2 548.3V559.5M592 475V486.2M602 475V486.2M689.5 462.6V473.8M699.5 462.6V473.8M613.9 512.5V523.7M623.9 512.5V523.7M706.3 522V533.2M716.3 522V533.2M634.6 550.8V562M644.6 550.8V562"/>
</g>
<g id="target" fill="none" stroke="#c8a0a8" stroke-opacity=".55" stroke-width="1.2"><circle cx="426.8" cy="315.6" r="7.5"/><path d="M426.8 306v6M417 315.6h6M426.8 319v6"/></g>

</svg><!-- overlays -->
<div class="ov" id="vtb" style="left:13px;top:83px;width:827px;height:28px;"></div>
<div class="ov" id="vlabel" style="left:13px;top:111px;width:293px;height:16px;border-radius:0 0 5px 0;background:rgba(204,204,204,.92);"></div>
<div class="ov" id="vzoom" style="left:13px;top:127px;width:96px;height:24px;border-radius:0 0 4px 0;background:rgba(208,208,208,.92);"></div>
<div class="ov" id="status" style="left:13px;top:539px;width:827px;height:22px;background:rgba(218,218,218,0.935);"></div>
<div class="t" style="left:15.2px;top:112px;font-size:11.5px;letter-spacing:.19px;">DP0.2 HiPS from DESC DC2 sim: gri color...</div>
<div class="t" style="left:250px;top:112px;font-size:11.5px;font-weight:bold;color:#3aa23a;letter-spacing:.1px;">FOV:6.6'</div>
<div class="t" style="left:56px;top:545px;font-size:11px;font-style:italic;text-decoration:underline;color:#333;">EQ-J2000:</div>
<div class="t" style="left:123.5px;top:545px;font-size:11px;font-weight:bold;letter-spacing:.09px;">3h42m51.86s, -32d17m36.1s</div>
<div class="abs" style="left:757.7px;top:544.6px;width:10.8px;height:10.8px;background:#fff;border-radius:2.2px;box-shadow:0 0 .5px rgba(0,0,0,.35);"></div>
<div class="t" style="left:774px;top:545px;font-size:11px;letter-spacing:-.12px;">Lock by click</div>
<!-- in-image toolbar -->
<svg class="abs" style="left:13px;top:83px;" width="350" height="70" viewBox="13 83 350 70">
<defs><linearGradient id="mg2" x1="0" y1="0" x2="1" y2="1"><stop offset="0" stop-color="#f0f0f0"/><stop offset=".5" stop-color="#d2d2d2"/><stop offset="1" stop-color="#a8a8a8"/></linearGradient></defs>
<g id="v-nofilter">
<path d="M20.400 93.400c0-1.400 2.800-2.300 6.100-2.300s6.100.9 6.100 2.300c0 .9-2.200 3.300-4.300 5.500v4.300c0 .8-.8 1.300-1.800 1.300s-1.800-.5-1.800-1.300v-4.300c-2.100-2.200-4.300-4.600-4.300-5.500z" fill="#c4c4c4" stroke="#555" stroke-width="1.350"/>
<ellipse cx="26.500" cy="93.500" rx="5" ry="1.700" fill="#858585"/>
<circle cx="27.100" cy="96.800" r="9.800" fill="none" stroke="#000" stroke-width="2"/>
<path d="M19.900 104L34.300 89.600" stroke="#000" stroke-width="2.400"/>
</g>
<!-- zoom icons -->
<g id="v-zoom" stroke="#000" fill="none">
<g><path d="M28.600 142.600l4.600 4.600" stroke-width="2" stroke-linecap="round"/><circle cx="23.400" cy="137.400" r="6.700" fill="url(#mg2)" stroke-width="1.500"/><path d="M19.600 137.400h7.600M23.400 133.600v7.600" stroke-width="1.500"/></g>
<g><path d="M52.500 142.600l4.600 4.600" stroke-width="2" stroke-linecap="round"/><circle cx="47.300" cy="137.400" r="6.700" fill="url(#mg2)" stroke-width="1.500"/><path d="M43.500 137.400h7.600" stroke-width="1.500"/></g>
<g><path d="M76.400 142.600l4.600 4.600" stroke-width="2" stroke-linecap="round"/><circle cx="71.200" cy="137.400" r="6.700" fill="#bdbdbd" stroke-width="1.500"/><path d="M67.300 133.500l2.600 2.600M75.100 133.500l-2.600 2.600M67.300 141.300l2.600-2.600M75.100 141.300l-2.600-2.600" stroke-width="1.500"/><path d="M66.600 135v-2.200h2.200zM75.800 135v-2.200h-2.200zM66.600 139.800v2.200h2.200zM75.800 139.800v2.200h-2.200z" fill="#000" stroke-width=".6"/></g>
<g><path d="M100.600 142.600l4.600 4.600" stroke-width="2" stroke-linecap="round"/><circle cx="95.400" cy="137.400" r="6.700" fill="url(#mg2)" stroke-width="1.500"/><path d="M91 137.400h8.800" stroke-width="1.300"/><path d="M90.200 137.400l2.600-2v4zM100.600 137.400l-2.600-2v4z" fill="#000" stroke-width=".5"/></g>
</g>
<path d="M342.500 94h10.600l-5.300 6.300z" fill="#0a5aa0"/>
</svg>
<div class="abs" style="left:46.500px;top:86.500px;width:119px;height:21px;border:1px solid rgba(120,120,120,.45);border-radius:5px;background:rgba(215,215,215,.35);"></div>
<div class="abs" style="left:50.300px;top:89px;width:39.700px;height:16px;background:#aaa;border-radius:3px 0 0 3px;"></div>
<div class="abs" style="left:91px;top:89px;width:70.700px;height:16px;background:#fff;border-radius:0 3px 3px 0;"></div>
<div class="t" style="left:57px;top:90.700px;font-family:'DejaVu Sans','Liberation Sans',sans-serif;font-size:11px;color:#222;letter-spacing:-.05px;">HiPS</div>
<div class="t" style="left:98px;top:90.700px;font-family:'DejaVu Sans','Liberation Sans',sans-serif;font-size:11px;color:#222;letter-spacing:-.08px;">HiPS/Aitoff</div>
<div class="abs" style="left:176px;top:89px;width:80px;height:16px;background:#fff;border-radius:4px;box-shadow:0 0 1px rgba(0,0,0,.35);"></div>
<div class="t" style="left:183px;top:90.700px;font-family:'DejaVu Sans','Liberation Sans',sans-serif;font-size:11px;color:#111;letter-spacing:.17px;">Eq J2000</div>
<svg class="abs" style="left:242px;top:91px;" width="13" height="12" viewBox="0 0 13 12"><rect x="0" y=".4" width="12.300" height="11.400" rx="3" fill="#2f7bf6"/><path d="M3.900 4.800l2.250-2.100l2.250 2.100M3.900 7.400l2.250 2.100l2.250-2.100" fill="none" stroke="#fff" stroke-width="1.300" stroke-linecap="round" stroke-linejoin="round"/></svg>
<div class="t" style="left:273px;top:91px;font-family:'DejaVu Sans','Liberation Sans',sans-serif;font-size:12px;color:#111;letter-spacing:-.06px;line-height:15px;">HiPS / MOC</div>
<!-- status popout icon -->
<svg class="abs" style="left:15px;top:540px;" width="20" height="20" viewBox="15 540 20 20"><path d="M23.500 543.600h-6.300v13.400h13.600v-6.200" fill="none" stroke="#111" stroke-width="1.300"/><path d="M24.300 550.200l7-7M26.300 543h5.100v5.100" fill="none" stroke="#111" stroke-width="1.300"/></svg>
<!-- right toolbar -->
<div class="abs" style="left:1340px;top:52px;width:56px;height:24px;border:1px solid #a8a8a8;border-radius:2px;background:#c8c8c8;font-size:11px;line-height:23.4px;text-align:center;white-space:nowrap;">Pin Chart</div>
<svg class="abs" style="left:1405px;top:46px;" width="295" height="34" viewBox="1405 46 295 34">
<defs><linearGradient id="mg3" x1="0" y1="0" x2="1" y2="1"><stop offset="0" stop-color="#ececec"/><stop offset=".5" stop-color="#c8c8c8"/><stop offset="1" stop-color="#a4a4a4"/></linearGradient></defs>
<!-- no filter -->
<g id="r-nofilter">
<path d="M1417.200 60.300c0-1.400 2.800-2.300 6.100-2.300s6.100.9 6.100 2.300c0 .9-2.200 3.300-4.300 5.500v4.300c0 .8-.8 1.300-1.800 1.300s-1.800-.5-1.800-1.300v-4.300c-2.100-2.200-4.300-4.600-4.300-5.500z" fill="#c4c4c4" stroke="#555" stroke-width="1.350"/>
<ellipse cx="1423.300" cy="60.400" rx="5" ry="1.700" fill="#858585"/>
<circle cx="1424" cy="63.7" r="9.9" fill="none" stroke="#000" stroke-width="2"/>
<path d="M1416.8 70.8L1431.2 56.6" stroke="#000" stroke-width="2.4"/>
</g>
<!-- zoom in -->
<g id="r-zin">
<path d="M1464.4 68.4l5.600 5.600" stroke="#000" stroke-width="2.4" stroke-linecap="round"/>
<circle cx="1458.100" cy="61.900" r="7.900" fill="url(#mg3)" stroke="#000" stroke-width="1.9"/>
<path d="M1453.300 61.900h9.600M1458.100 57.100v9.600" stroke="#000" stroke-width="2"/>
</g>
<!-- move -->
<g id="r-move">
<g fill="#d2d2d2"><rect x="1480.600" y="58.400" width="3.300" height="3.300"/><rect x="1488" y="58.400" width="3.300" height="3.300"/><rect x="1480.600" y="66" width="3.300" height="3.300"/><rect x="1488" y="66" width="3.300" height="3.300"/></g>
<g fill="#000"><path d="M1485.900 52.300l5 5.300h-3.200v3.600h-3.600v-3.600h-3.200z"/><path d="M1485.900 75.300l5-5.300h-3.200v-3.600h-3.600v3.600h-3.200z"/><path d="M1474.500 63.800l5.300-5v3.200h3.600v3.600h-3.600v3.200z"/><path d="M1497.300 63.800l-5.300-5v3.200h-3.600v3.600h3.600v3.200z"/></g>
</g>
<!-- select (active) -->
<g id="r-sel">
<rect x="1502.700" y="54.600" width="18.600" height="18.600" fill="none" stroke="#000" stroke-width="1.800" stroke-dasharray="1.300 1.025"/>
<path d="M1502.700 57.400v-2.800h2.800M1518.500 54.600h2.800v2.800M1521.300 70.400v2.800h-2.800M1505.500 73.200h-2.800v-2.800" fill="none" stroke="#000" stroke-width="1.900"/>
<rect x="1500.100" y="76.100" width="23.900" height="2.800" fill="#8b0000"/>
</g>
<!-- 1x -->
<g id="r-1x">
<path d="M1557.300 69.200l4.800 4.800" stroke="#000" stroke-width="2.400" stroke-linecap="round"/>
<circle cx="1550.400" cy="62.400" r="8.500" fill="url(#mg3)" stroke="#000" stroke-width="1.900"/>
<text x="1550.100" y="66.300" font-family="'DejaVu Sans','Liberation Sans',sans-serif" font-size="10.500" text-anchor="middle" fill="#000" letter-spacing="-1.300">1x</text>
</g>
<!-- save -->
<g id="r-save">
<path d="M1568.200 54.200h19.700v19.300h-17.200l-2.500-2.500z" fill="#000"/>
<path d="M1570 64.800h16.400v7.400h-14.900l-1.500-1.500z" fill="#6c6c6c"/>
<path d="M1569.800 55.700h1.500v9h-1.500zM1584.900 55.700h1.500v9h-1.500z" fill="#555"/>
<rect x="1571.700" y="55.700" width="12.400" height="8.400" fill="#ececec"/>
<path d="M1571.700 57.300h12.400M1571.700 59.400h12.400M1571.700 61.500h12.400" stroke="#777" stroke-width="1"/>
<rect x="1573.600" y="66.400" width="8.600" height="5.500" fill="#e4e4e4" stroke="#000" stroke-width=".6"/>
<rect x="1574.900" y="67.600" width="1.200" height="3.200" fill="#111"/>
</g>
<!-- undo -->
<g id="r-undo">
<path d="M1598.400 59.300l7.400-6.600v4.200c4.600.6 8.600 4 8.600 9c0 5.200-5.400 8.400-10.600 7.600c-4-.6-7.200-2.800-8.800-5.400c2.400 2 5.200 3.200 8.400 3.200c3.800 0 6.600-2.400 6.600-5.400c0-2.800-1.800-4.400-4.200-4.800v5.400z" fill="#000"/>
</g>
<!-- filter -->
<g id="r-filter">
<path d="M1620.700 58l6.800 6.200v8.200c0 .9 1.100 1.300 2.500 1.300s2.500-.4 2.500-1.300v-8.200l6.800-6.200" fill="#d0d0d0" stroke="#000" stroke-width="1.700" stroke-linejoin="round"/>
<ellipse cx="1630" cy="57.500" rx="9.200" ry="3" fill="#9a9a9a" stroke="#000" stroke-width="1.700"/>
</g>
<!-- gears -->
<g id="r-gears">
<circle cx="1652.700" cy="60.700" r="6.100" fill="none" stroke="#000" stroke-width="2.600" stroke-dasharray="2.400 2.390"/>
<circle cx="1652.700" cy="60.700" r="4.300" fill="#b4b4b4" stroke="#000" stroke-width="2.800"/>
<rect x="1651.700" y="59.700" width="2" height="2" fill="#000"/>
<circle cx="1660.100" cy="68.100" r="5.400" fill="none" stroke="#000" stroke-width="2.600" stroke-dasharray="2.130 2.110"/>
<circle cx="1660.100" cy="68.100" r="3.700" fill="#c6c6c6" stroke="#000" stroke-width="2.200"/>
</g>
<!-- expand -->
<g id="r-exp" transform="translate(853.100 1.100)">
<path d="M818.4 52.5H827.4L824.2 55.7L836.1 67.600L839.300 64.400V73.400H830.300L833.500 70.200L821.600 58.300L818.400 61.500Z" fill="#000" stroke="#fff" stroke-width="1.8" stroke-linejoin="round" paint-order="stroke"/>
<path d="M827.2 64.3L830.4 61.1" stroke="#fff" stroke-width="1.4" fill="none"/>
</g>
</svg>
<svg class="abs" id="chart" style="left:858px;top:82px;" width="836" height="481" viewBox="858 82 836 481" font-family="'DejaVu Sans','Liberation Sans',sans-serif">
<rect x="858" y="82" width="836" height="481" fill="#fff"/>
<g id="points" fill="#1f77b4" fill-opacity="0.55">
<circle cx="1036.1" cy="274.8" r="3"/>
<circle cx="1068.6" cy="213.9" r="3"/>
<circle cx="1277.1" cy="272.8" r="3"/>
<circle cx="1302.3" cy="169" r="3"/>
<circle cx="1328" cy="163.7" r="3"/>
<circle cx="1398.6" cy="169.5" r="3"/>
<circle cx="1538.4" cy="184.7" r="3"/>
<circle cx="1515.2" cy="209.2" r="3"/>
<circle cx="1567.4" cy="205.9" r="3"/>
<circle cx="1543.9" cy="237.6" r="3"/>
<circle cx="1555.4" cy="238.1" r="3"/>
<circle cx="1575.4" cy="256.4" r="3"/>
<circle cx="1569.7" cy="259.4" r="3"/>
<circle cx="1557.4" cy="261.9" r="3"/>
<circle cx="1549.9" cy="262.6" r="3"/>
<circle cx="1521.2" cy="269.6" r="3"/>
<circle cx="1554.4" cy="269.8" r="3"/>
<circle cx="975.4" cy="366.1" r="3"/>
<circle cx="999.3" cy="361.9" r="3"/>
<circle cx="1054" cy="376.1" r="3"/>
<circle cx="1066.2" cy="359.7" r="3"/>
<circle cx="1083.2" cy="362.2" r="3"/>
<circle cx="1087" cy="344.9" r="3"/>
<circle cx="1095.3" cy="360.4" r="3"/>
<circle cx="1119.2" cy="370.3" r="3"/>
<circle cx="1125.2" cy="364" r="3"/>
<circle cx="1123.1" cy="355.9" r="3"/>
<circle cx="1128.3" cy="356.4" r="3"/>
<circle cx="1136.1" cy="346" r="3"/>
<circle cx="1143.7" cy="356.6" r="3"/>
<circle cx="1143.3" cy="365.9" r="3"/>
<circle cx="1145.6" cy="348" r="3"/>
<circle cx="1146.8" cy="348.8" r="3"/>
<circle cx="1157.6" cy="367.5" r="3"/>
<circle cx="1160.6" cy="347.8" r="3"/>
<circle cx="1164.9" cy="345.3" r="3"/>
<circle cx="1166.3" cy="346.3" r="3"/>
<circle cx="1167.4" cy="347.8" r="3"/>
<circle cx="1168.4" cy="348.4" r="3"/>
<circle cx="1171.2" cy="348.1" r="3"/>
<circle cx="1167.3" cy="350.7" r="3"/>
<circle cx="1165.3" cy="357.6" r="3"/>
<circle cx="1165.7" cy="357.9" r="3"/>
<circle cx="1170.8" cy="372.3" r="3"/>
<circle cx="1176.3" cy="341.7" r="3"/>
<circle cx="1172" cy="358.8" r="3"/>
<circle cx="1173.7" cy="359.5" r="3"/>
<circle cx="1174.5" cy="357.6" r="3"/>
<circle cx="1173" cy="361.8" r="3"/>
<circle cx="1178.3" cy="349.9" r="3"/>
<circle cx="1181.2" cy="348.2" r="3"/>
<circle cx="1180.2" cy="360" r="3"/>
<circle cx="1180.8" cy="359.5" r="3"/>
<circle cx="1182.2" cy="357.8" r="3"/>
<circle cx="1182.8" cy="353.2" r="3"/>
<circle cx="1183.7" cy="353.8" r="3"/>
<circle cx="1184.5" cy="347.4" r="3"/>
<circle cx="1185.6" cy="344.9" r="3"/>
<circle cx="1187.4" cy="361.5" r="3"/>
<circle cx="1190.1" cy="346.2" r="3"/>
<circle cx="1190.9" cy="347.1" r="3"/>
<circle cx="1192.7" cy="349.2" r="3"/>
<circle cx="1196.1" cy="347.4" r="3"/>
<circle cx="1193.8" cy="357.6" r="3"/>
<circle cx="1193.3" cy="367.3" r="3"/>
<circle cx="1201.1" cy="347.8" r="3"/>
<circle cx="1201.6" cy="350.7" r="3"/>
<circle cx="1204.5" cy="346.2" r="3"/>
<circle cx="1207.1" cy="342.8" r="3"/>
<circle cx="1205.5" cy="373" r="3"/>
<circle cx="1209.3" cy="358.5" r="3"/>
<circle cx="1209.9" cy="360.3" r="3"/>
<circle cx="1214" cy="349.1" r="3"/>
<circle cx="1214" cy="360.7" r="3"/>
<circle cx="1215.3" cy="354.9" r="3"/>
<circle cx="1216.5" cy="347.4" r="3"/>
<circle cx="1218.2" cy="347" r="3"/>
<circle cx="1218.8" cy="343.7" r="3"/>
<circle cx="1217.4" cy="357" r="3"/>
<circle cx="1219" cy="357" r="3"/>
<circle cx="1215.7" cy="358.6" r="3"/>
<circle cx="1219.9" cy="348.6" r="3"/>
<circle cx="1222.4" cy="354.5" r="3"/>
<circle cx="1222" cy="358.6" r="3"/>
<circle cx="1224" cy="347" r="3"/>
<circle cx="1224.5" cy="347.2" r="3"/>
<circle cx="1224.4" cy="361.5" r="3"/>
<circle cx="1227.8" cy="341.3" r="3"/>
<circle cx="1228.8" cy="352.1" r="3"/>
<circle cx="1227.2" cy="370.6" r="3"/>
<circle cx="1232.4" cy="363.2" r="3"/>
<circle cx="1233.6" cy="363.5" r="3"/>
<circle cx="1232.6" cy="376.4" r="3"/>
<circle cx="1233.8" cy="342.8" r="3"/>
<circle cx="1234.9" cy="349.2" r="3"/>
<circle cx="1236.1" cy="344.5" r="3"/>
<circle cx="1236.5" cy="345.7" r="3"/>
<circle cx="1238.2" cy="349.5" r="3"/>
<circle cx="1238.8" cy="350" r="3"/>
<circle cx="1243.8" cy="361.3" r="3"/>
<circle cx="1247.3" cy="349.1" r="3"/>
<circle cx="1248" cy="365.9" r="3"/>
<circle cx="1249.4" cy="352.8" r="3"/>
<circle cx="1251.5" cy="345.3" r="3"/>
<circle cx="1252.5" cy="353.7" r="3"/>
<circle cx="1262" cy="344.9" r="3"/>
<circle cx="1259" cy="364.9" r="3"/>
<circle cx="1266" cy="355.8" r="3"/>
<circle cx="1265.3" cy="360.9" r="3"/>
<circle cx="1269.3" cy="360.7" r="3"/>
<circle cx="1273.1" cy="361.3" r="3"/>
<circle cx="1274.3" cy="361.6" r="3"/>
<circle cx="1276.8" cy="362.2" r="3"/>
<circle cx="1279.7" cy="354.4" r="3"/>
<circle cx="1285.8" cy="347.8" r="3"/>
<circle cx="1285.7" cy="363.7" r="3"/>
<circle cx="1292.9" cy="347.2" r="3"/>
<circle cx="1301.2" cy="344.8" r="3"/>
<circle cx="1305.8" cy="303.1" r="3"/>
<circle cx="1307.4" cy="302.7" r="3"/>
<circle cx="1312.8" cy="364.9" r="3"/>
<circle cx="1332.8" cy="328.6" r="3"/>
<circle cx="1329.6" cy="341.7" r="3"/>
<circle cx="1342.6" cy="347.8" r="3"/>
<circle cx="1338.3" cy="353.4" r="3"/>
<circle cx="1334.3" cy="354.9" r="3"/>
<circle cx="1332.4" cy="356.8" r="3"/>
<circle cx="1348.4" cy="353.7" r="3"/>
<circle cx="1348.9" cy="354.2" r="3"/>
<circle cx="1362.4" cy="353.4" r="3"/>
<circle cx="1384.8" cy="305.1" r="3"/>
<circle cx="1374.6" cy="328.1" r="3"/>
<circle cx="1389.1" cy="334.5" r="3"/>
<circle cx="1381.5" cy="351.1" r="3"/>
<circle cx="1385.6" cy="354.1" r="3"/>
<circle cx="1393.1" cy="356.4" r="3"/>
<circle cx="1401.7" cy="355.3" r="3"/>
<circle cx="1404.6" cy="357.3" r="3"/>
<circle cx="1400.7" cy="359.4" r="3"/>
<circle cx="1421.7" cy="314.9" r="3"/>
<circle cx="1419.5" cy="357.4" r="3"/>
<circle cx="1418.5" cy="358.4" r="3"/>
<circle cx="1423.8" cy="361.2" r="3"/>
<circle cx="1427.7" cy="358.8" r="3"/>
<circle cx="1431" cy="337.3" r="3"/>
<circle cx="1435.4" cy="364.9" r="3"/>
<circle cx="1438.5" cy="325.3" r="3"/>
<circle cx="1442" cy="305.1" r="3"/>
<circle cx="1449.6" cy="294.6" r="3"/>
<circle cx="1473.5" cy="298.8" r="3"/>
<circle cx="1483.9" cy="324.9" r="3"/>
<circle cx="1509.5" cy="320.4" r="3"/>
<circle cx="1523.4" cy="332.4" r="3"/>
<circle cx="1538.3" cy="313.1" r="3"/>
<circle cx="1541.9" cy="321.6" r="3"/>
<circle cx="1564.4" cy="301" r="3"/>
<circle cx="1569.5" cy="311.8" r="3"/>
<circle cx="1562" cy="333.7" r="3"/>
<circle cx="1453.7" cy="352.1" r="3"/>
<circle cx="1461" cy="354.1" r="3"/>
<circle cx="1472.2" cy="350" r="3"/>
<circle cx="1477.2" cy="350.6" r="3"/>
<circle cx="1479" cy="354.4" r="3"/>
<circle cx="1476.8" cy="362" r="3"/>
<circle cx="1470.6" cy="364.7" r="3"/>
<circle cx="1467.7" cy="367" r="3"/>
<circle cx="1490.2" cy="359.7" r="3"/>
<circle cx="1490.9" cy="365.5" r="3"/>
<circle cx="1498.9" cy="362.1" r="3"/>
<circle cx="1507.2" cy="392.6" r="3"/>
<circle cx="1514.5" cy="370.8" r="3"/>
<circle cx="1517" cy="370" r="3"/>
<circle cx="1521.4" cy="361.3" r="3"/>
<circle cx="1520" cy="390.3" r="3"/>
<circle cx="1527.6" cy="387.9" r="3"/>
<circle cx="1530.5" cy="379.6" r="3"/>
<circle cx="1533.1" cy="381.1" r="3"/>
<circle cx="1532.3" cy="354.5" r="3"/>
<circle cx="1535.5" cy="344" r="3"/>
<circle cx="1547.6" cy="351" r="3"/>
<circle cx="1546.5" cy="365" r="3"/>
<circle cx="1552.7" cy="365.1" r="3"/>
<circle cx="1545.8" cy="401.9" r="3"/>
<circle cx="1560" cy="386.7" r="3"/>
<circle cx="1561.1" cy="367.2" r="3"/>
<circle cx="1564.9" cy="368.5" r="3"/>
<circle cx="1566.1" cy="361.8" r="3"/>
<circle cx="1570.7" cy="361.2" r="3"/>
<circle cx="1575.6" cy="365.6" r="3"/>
<circle cx="1577.3" cy="350.2" r="3"/>
<circle cx="1229.7" cy="382.7" r="3"/>
<circle cx="1257.7" cy="374.2" r="3"/>
<circle cx="1238.5" cy="400.7" r="3"/>
<circle cx="1337.1" cy="404.7" r="3"/>
<circle cx="1145.8" cy="465.1" r="3"/>
<circle cx="1422" cy="450.4" r="3"/>
<circle cx="1529.8" cy="412.8" r="3"/>
<circle cx="1540.3" cy="425.9" r="3"/>
<circle cx="1529.8" cy="438.4" r="3"/>
<circle cx="1525" cy="460.1" r="3"/>
<circle cx="1480.6" cy="466.7" r="3"/>
<circle cx="1470.1" cy="468.2" r="3"/>
<circle cx="1413.7" cy="479.3" r="3"/>
<circle cx="1461.8" cy="480.3" r="3"/>
<circle cx="1547.3" cy="481" r="3"/>
<circle cx="1333.6" cy="286.8" r="3"/>
</g>
<circle cx="1570.7" cy="368.8" r="4" fill="#ff9a28"/>
<g id="axes" stroke="#444" stroke-width="1" fill="none" shape-rendering="crispEdges">
<path d="M937.5 142V504"/><path d="M937 503.5H1615"/>
<path d="M932 190.5h5M932 252.5h5M932 314.5h5M932 376.5h5M932 437.5h5M932 499.5h5"/>
<path d="M1019.5 504v5M1143.5 504v5M1267.5 504v5M1392.5 504v5M1516.5 504v5"/>
</g>
<g id="ylab" font-size="12" fill="#444" text-anchor="end">
<text x="929" y="195">1</text><text x="929" y="257">0.8</text><text x="929" y="319">0.6</text><text x="929" y="381">0.4</text><text x="929" y="442">0.2</text><text x="929" y="504">0</text>
</g>
<g id="xlab" font-size="12" fill="#444" text-anchor="middle">
<text x="1019.5" y="524">16</text><text x="1143.5" y="524">17</text><text x="1267.5" y="524">18</text><text x="1392.5" y="524">19</text><text x="1516.5" y="524">20</text>
</g>
<text x="1276" y="112" font-size="17" fill="#444" text-anchor="middle">Red Sequence</text>
<text x="1276.3" y="549" font-size="12" fill="#444" text-anchor="middle">i</text>
<text transform="translate(897.3,322.2) rotate(-90)" font-size="13.5" fill="#444" text-anchor="middle">r-i</text>

</svg></div>
</body>
</html>
